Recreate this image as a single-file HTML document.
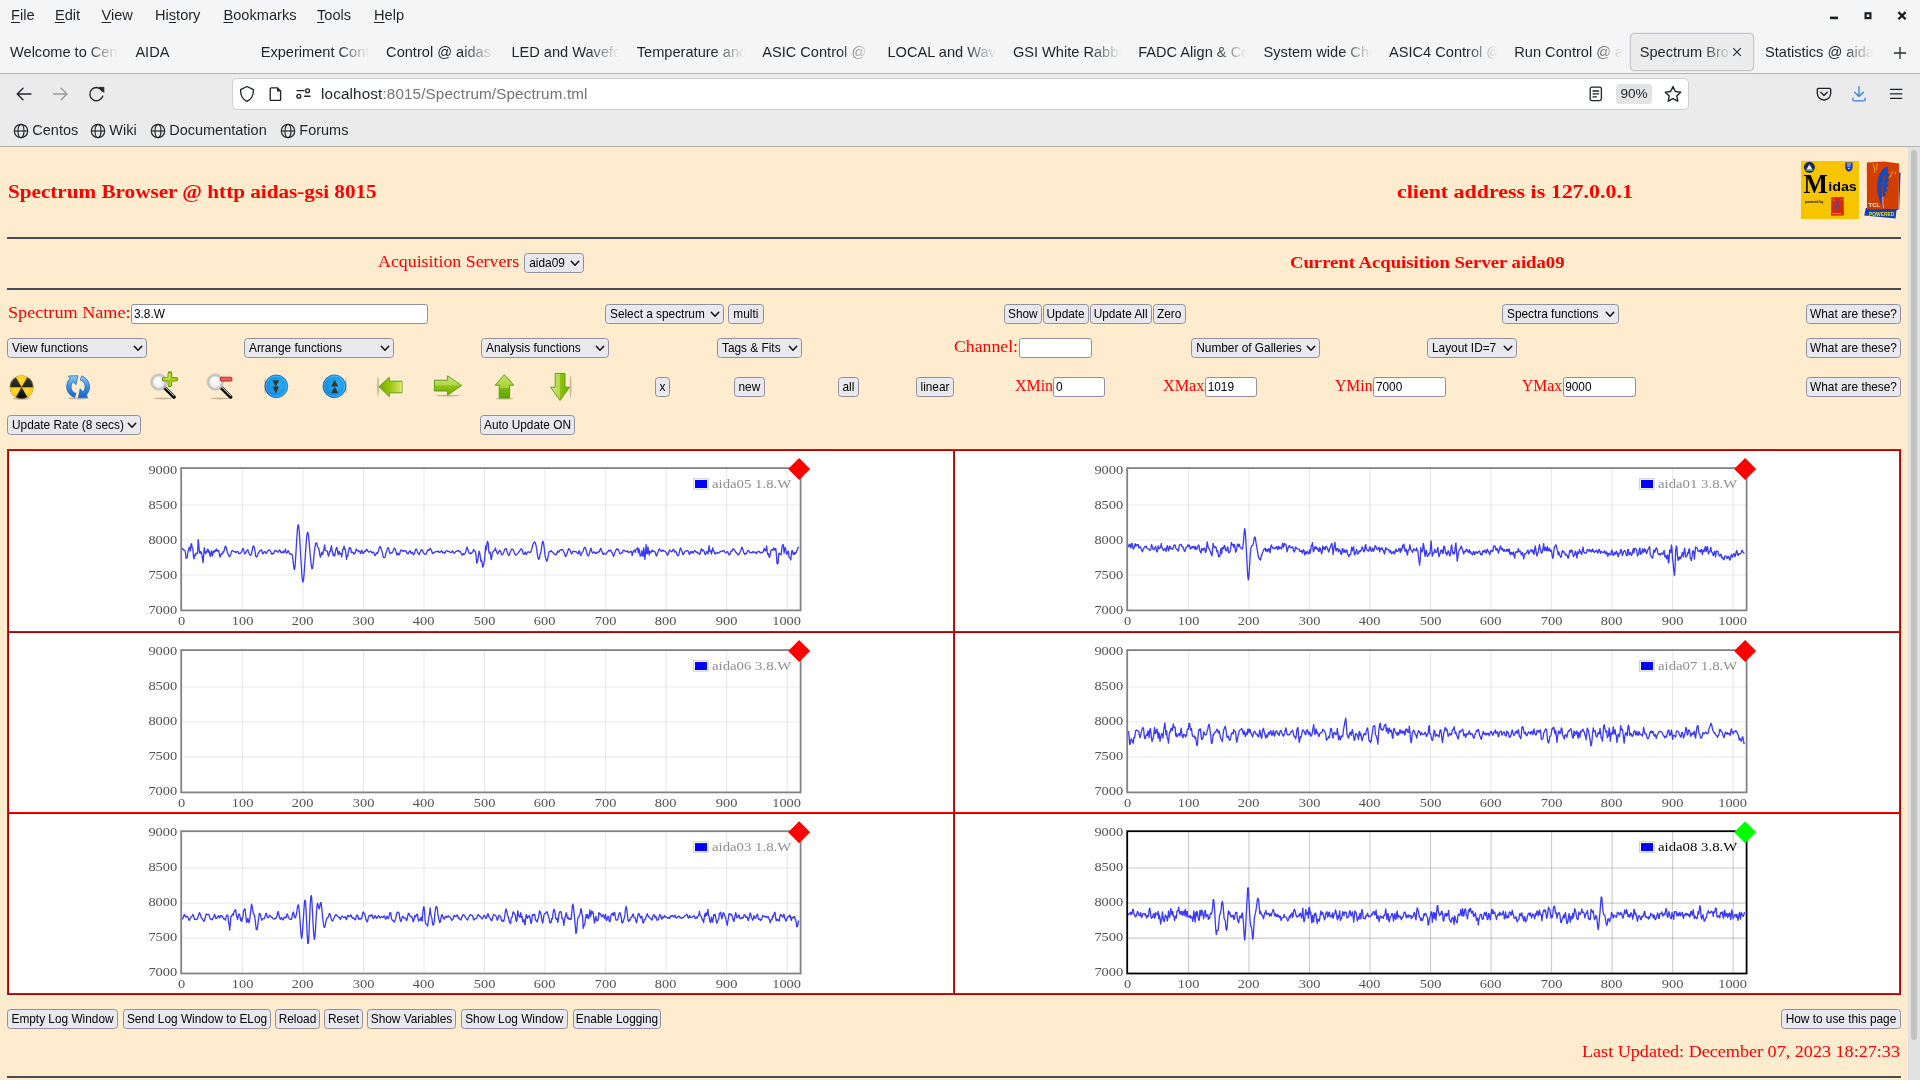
<!DOCTYPE html>
<html><head><meta charset="utf-8"><title>Spectrum Browser</title>
<style>
*{box-sizing:border-box;margin:0;padding:0}
html,body{width:1920px;height:1080px;overflow:hidden;background:#ffebcd;font-family:"Liberation Sans",sans-serif;}
body{position:relative}
.abs,.abs *{position:absolute}
div,span,svg{position:absolute}
/* ---- browser chrome ---- */
#top{left:0;top:0;width:1920px;height:73px;background:#f5f5f5}
#tabline{left:0;top:73px;width:1920px;height:1px;background:#b5b5b5}
#nav{left:0;top:74px;width:1920px;height:72px;background:#ebebeb}
#navline{left:0;top:146px;width:1920px;height:1px;background:#b4b5b2}
.menu{top:6px;font-size:14.6px;color:#1f2326;white-space:pre;line-height:18px}
.menu u{text-decoration:underline;text-underline-offset:2px;text-decoration-thickness:1px}
.tab{top:42.8px;height:19px;width:110px;overflow:hidden;font-size:14.6px;line-height:19px;color:#1f2326;white-space:pre;
  -webkit-mask-image:linear-gradient(to right,#000 0,#000 77px,transparent 108px);mask-image:linear-gradient(to right,#000 0,#000 77px,transparent 108px)}
#acttab{left:1630px;top:33px;width:123.5px;height:37.5px;background:#ececec;border:1px solid #c5c5cb;border-radius:4.5px;box-shadow:0 0 1.5px rgba(0,0,0,.18)}
#url{left:232px;top:78px;width:1457px;height:32px;background:#fff;border:1px solid #cfcfcf;border-radius:5px}
.urltxt{left:321px;top:84px;font-size:15.2px;line-height:20px;color:#1f2326;white-space:pre;letter-spacing:.16px}
.urltxt span{position:static;color:#737373}
#zoom90{left:1616px;top:84px;width:36px;height:20px;background:#e4e4e4;border-radius:3px;font-size:13.6px;line-height:20px;text-align:center;color:#1f2326}
.bm{top:121px;font-size:14.5px;line-height:18px;color:#1f2326;white-space:pre}
/* ---- page ---- */
.red{color:#f00;font-family:"Liberation Serif",serif;white-space:pre}
.hr{left:7px;width:1894px;height:2px;background:#484b52}
.btn{height:19.5px;background:#e9e9ed;border:1px solid #8f8f9d;border-radius:3.5px;font-size:11.85px;line-height:19px;color:#000;text-align:center;white-space:pre;overflow:hidden}
.sel{height:19.5px;background:#e9e9ed;border:1px solid #8f8f9d;border-radius:3.5px;font-size:11.85px;line-height:19px;overflow:hidden;color:#000;white-space:pre;padding-left:4px}
.sel svg{right:2.7px;top:6.2px}
.inp{height:19.5px;background:#fff;border:1px solid #8f8f9d;border-radius:2.5px;font-size:11.85px;line-height:19.4px;color:#000;white-space:pre;padding-left:1.7px;overflow:hidden}
/* ---- table ---- */
.rl{background:#ff0000}
.rd{background:#ad0000}
#tblbg{left:9px;top:451px;width:1890px;height:542px;background:#fff}
.plot{width:621px;height:144px;border:2px solid #808080;background:#fff}
.plot svg{left:0;top:0}
.yl,.xl,.lgt{font-family:"Liberation Serif",serif;font-size:12px;line-height:14px;letter-spacing:0;color:#545454;white-space:pre}
.yl{width:37.2px;text-align:right;transform:scaleX(1.2);transform-origin:100% 50%}
.xl{width:41.2px;text-align:center;transform:scaleX(1.2);transform-origin:50% 50%}
.lgt{transform:scaleX(1.232);transform-origin:0 50%}
.lgbox{width:14px;height:10.5px;border:1px solid #ccc;padding:1px;background:#fff}
.lgbox i{position:absolute;left:1px;top:1px;right:1px;bottom:1px;background:#0000ff;border:1px solid #4d4dff}
.dia{width:16px;height:16px;transform:rotate(45deg)}
#sbtrack{left:1908px;top:147px;width:12px;height:933px;background:#e2e2e0;border-left:1px solid #dfe0df}
#sbthumb{left:1911px;top:149.7px;width:6px;height:890px;background:#c2c4c3;border-radius:3px}

#root{left:0;top:0;width:1920px;height:1080px;will-change:transform;overflow:hidden}

</style></head>
<body>
<div id="root">
<div id="top"></div><div id="tabline"></div><div id="nav"></div><div id="navline"></div>
<div class="menu" style="left:11px"><u>F</u>ile</div>
<div class="menu" style="left:55px"><u>E</u>dit</div>
<div class="menu" style="left:101.5px"><u>V</u>iew</div>
<div class="menu" style="left:155px">Hi<u>s</u>tory</div>
<div class="menu" style="left:223.5px"><u>B</u>ookmarks</div>
<div class="menu" style="left:317px"><u>T</u>ools</div>
<div class="menu" style="left:374px"><u>H</u>elp</div>
<svg style="left:1826px;top:6px" width="88" height="20" viewBox="0 0 88 20"><g fill="none" stroke="#1b1f22"><path d="M4 11.9H12" stroke-width="2.6"/><rect x="39.6" y="7.3" width="4.8" height="4.8" stroke-width="2.2"/><path d="M72.4 6.1L79.6 13.3M79.6 6.1L72.4 13.3" stroke-width="2.3"/></g></svg>
<div id="acttab"></div>
<div class="tab" style="left:10.0px">Welcome to CentOS</div>
<div class="tab" style="left:135.4px">AIDA</div>
<div class="tab" style="left:260.7px">Experiment Control</div>
<div class="tab" style="left:386.1px">Control @ aidas-gsi</div>
<div class="tab" style="left:511.4px">LED and Waveform</div>
<div class="tab" style="left:636.8px">Temperature and</div>
<div class="tab" style="left:762.2px">ASIC Control @ aidas</div>
<div class="tab" style="left:887.5px">LOCAL and Waveform</div>
<div class="tab" style="left:1012.9px">GSI White Rabbit</div>
<div class="tab" style="left:1138.2px">FADC Align & Control</div>
<div class="tab" style="left:1263.6px">System wide Check</div>
<div class="tab" style="left:1389.0px">ASIC4 Control @ aidas</div>
<div class="tab" style="left:1514.3px">Run Control @ aidas</div>
<div class="tab" style="left:1639.7px;width:94px;-webkit-mask-image:linear-gradient(to right,#000 0,#000 62px,transparent 92px);mask-image:linear-gradient(to right,#000 0,#000 62px,transparent 92px)">Spectrum Browser</div>
<div class="tab" style="left:1765.0px">Statistics @ aidas-gsi</div>
<svg style="left:1731px;top:46px" width="12" height="12" viewBox="0 0 12 12"><path d="M2.2 2.2L9.8 9.8M9.8 2.2L2.2 9.8" stroke="#2a2e32" stroke-width="1.2" fill="none"/></svg>
<svg style="left:1893px;top:46px" width="14" height="14" viewBox="0 0 14 14"><path d="M1 7H13M7 1V13" stroke="#2a2e32" stroke-width="1.3" fill="none"/></svg>
<svg style="left:14px;top:84px" width="100" height="20" viewBox="0 0 100 20"><g fill="none" stroke-width="1.4" stroke-linecap="round" stroke-linejoin="round"><path d="M17 10H3.5M9 4.2L3.2 10L9 15.8" stroke="#24282b"/><path d="M39.5 10H53M47.2 4.2L53 10L47.2 15.8" stroke="#9a9a9a"/><path d="M88.3 7.2A6.6 6.6 0 1 0 88.7 12.2" stroke="#24282b"/></g><path d="M85 3.4H89.8V8.3Z" fill="#24282b" stroke="#24282b" stroke-width="1" stroke-linejoin="round"/></svg>
<div id="url"></div>
<svg style="left:238px;top:84px" width="76" height="20" viewBox="0 0 76 20"><g fill="none" stroke="#1f2326" stroke-width="1.35" stroke-linejoin="round" stroke-linecap="round"><path d="M9 2.5L15.4 5.6C15.6 10.5 13.6 15.2 9 17.3C4.4 15.2 2.4 10.5 2.6 5.6Z"/><path d="M33.2 3.8H39.3L42.6 7.1V15.4A1 1 0 0 1 41.6 16.4H33.2A1 1 0 0 1 32.2 15.4V4.8A1 1 0 0 1 33.2 3.8Z"/><path d="M59 6.6H66M66.5 12.2H72"/><circle cx="69.6" cy="6.7" r="1.9"/><circle cx="60.8" cy="12.2" r="1.9"/></g><path d="M39 3.8L42.6 7.4H39Z" fill="#1f2326"/></svg>
<div class="urltxt">localhost<span>:8015/Spectrum/Spectrum.tml</span></div>
<svg style="left:1588px;top:85px" width="16" height="18" viewBox="0 0 16 18"><g fill="none" stroke="#1f2326" stroke-width="1.3" stroke-linecap="round"><rect x="2.2" y="2.2" width="11.2" height="13.4" rx="1.8"/><path d="M5 6H10.6M5 8.9H10.6M5 11.8H8.4"/></g></svg>
<div id="zoom90">90%</div>
<svg style="left:1663px;top:84px" width="20" height="20" viewBox="0 0 20 20"><path d="M10 2.6L12.3 7.5L17.7 8.2L13.8 11.9L14.8 17.2L10 14.6L5.2 17.2L6.2 11.9L2.3 8.2L7.7 7.5Z" fill="none" stroke="#1f2326" stroke-width="1.35" stroke-linejoin="round"/></svg>
<svg style="left:1815px;top:85px" width="18" height="18" viewBox="0 0 18 18"><g fill="none" stroke="#1f2326" stroke-width="1.35" stroke-linecap="round" stroke-linejoin="round"><path d="M3.6 3.3H14.4A1.3 1.3 0 0 1 15.7 4.6V8.3A6.7 6.7 0 0 1 2.3 8.3V4.6A1.3 1.3 0 0 1 3.6 3.3Z"/><path d="M5.8 7.3L9 10.4L12.2 7.3"/></g></svg>
<svg style="left:1850px;top:84px" width="18" height="20" viewBox="0 0 18 20"><g fill="none" stroke="#3584e4" stroke-width="1.35" stroke-linecap="round" stroke-linejoin="round"><path d="M9 2.6V12.4M4.6 8.2L9 12.6L13.4 8.2"/><path d="M2.9 14.2V15.4A1.4 1.4 0 0 0 4.3 16.8H13.7A1.4 1.4 0 0 0 15.1 15.4V14.2"/></g></svg>
<svg style="left:1888px;top:86px" width="16" height="16" viewBox="0 0 16 16"><path d="M2 3.4H14.3M2 7.9H14.3M2 12.4H14.3" stroke="#1f2326" stroke-width="1.35" fill="none"/></svg>
<svg style="left:12.5px;top:122.5px" width="16" height="16" viewBox="0 0 16 16"><g fill="none" stroke="#24282b" stroke-width="1.2"><circle cx="8" cy="8" r="6.7"/><ellipse cx="8" cy="8" rx="3" ry="6.7"/><path d="M1.3 8H14.7"/></g></svg>
<div class="bm" style="left:32.3px">Centos</div>
<svg style="left:90px;top:122.5px" width="16" height="16" viewBox="0 0 16 16"><g fill="none" stroke="#24282b" stroke-width="1.2"><circle cx="8" cy="8" r="6.7"/><ellipse cx="8" cy="8" rx="3" ry="6.7"/><path d="M1.3 8H14.7"/></g></svg>
<div class="bm" style="left:109.3px">Wiki</div>
<svg style="left:150px;top:122.5px" width="16" height="16" viewBox="0 0 16 16"><g fill="none" stroke="#24282b" stroke-width="1.2"><circle cx="8" cy="8" r="6.7"/><ellipse cx="8" cy="8" rx="3" ry="6.7"/><path d="M1.3 8H14.7"/></g></svg>
<div class="bm" style="left:169.2px">Documentation</div>
<svg style="left:279.5px;top:122.5px" width="16" height="16" viewBox="0 0 16 16"><g fill="none" stroke="#24282b" stroke-width="1.2"><circle cx="8" cy="8" r="6.7"/><ellipse cx="8" cy="8" rx="3" ry="6.7"/><path d="M1.3 8H14.7"/></g></svg>
<div class="bm" style="left:299.3px">Forums</div>
<div id="sbtrack"></div><div id="sbthumb"></div>
<div class="red" style="left:7.5px;top:179.88px;font-size:19.6px;line-height:23.5px;letter-spacing:0;transform:scaleX(1.0799);transform-origin:0 0;font-weight:700;">Spectrum Browser @ http aidas-gsi 8015</div>
<div class="red" style="left:1397px;top:179.88px;font-size:19.6px;line-height:23.5px;letter-spacing:0;transform:scaleX(1.119);transform-origin:0 0;font-weight:700;">client address is 127.0.0.1</div>
<div class="hr" style="top:237px"></div>
<div class="red" style="left:377.5px;top:251.53px;font-size:16.5px;line-height:19.8px;letter-spacing:0;transform:scaleX(1.0815);transform-origin:0 0;">Acquisition Servers</div>
<div class="sel" style="left:524.25px;top:253.25px;width:59.5px">aida09<svg width="10" height="7" viewBox="0 0 10 7"><path d="M1.3 1.2L5 5.2L8.7 1.2" fill="none" stroke="#15141a" stroke-width="1.55" stroke-linecap="round" stroke-linejoin="round"/></svg></div>
<div class="red" style="left:1290px;top:251.59px;font-size:17.5px;line-height:21.0px;letter-spacing:0;transform:scaleX(1.066);transform-origin:0 0;font-weight:700;">Current Acquisition Server aida09</div>
<div class="hr" style="top:288px"></div>
<div class="red" style="left:7.5px;top:302.53px;font-size:16.5px;line-height:19.8px;letter-spacing:0;transform:scaleX(1.1006);transform-origin:0 0;">Spectrum Name:</div>
<div class="inp" style="left:131.25px;top:304.25px;width:296.75px">3.8.W</div>
<div class="sel" style="left:605px;top:304.25px;width:118.75px">Select a spectrum<svg width="10" height="7" viewBox="0 0 10 7"><path d="M1.3 1.2L5 5.2L8.7 1.2" fill="none" stroke="#15141a" stroke-width="1.55" stroke-linecap="round" stroke-linejoin="round"/></svg></div>
<div class="btn" style="left:728px;top:304.25px;width:35.75px">multi</div>
<div class="btn" style="left:1004.25px;top:304.25px;width:37.25px">Show</div>
<div class="btn" style="left:1042.5px;top:304.25px;width:46.25px">Update</div>
<div class="btn" style="left:1089.5px;top:304.25px;width:62.25px">Update All</div>
<div class="btn" style="left:1152.5px;top:304.25px;width:33.25px">Zero</div>
<div class="sel" style="left:1502px;top:304.25px;width:116.75px">Spectra functions<svg width="10" height="7" viewBox="0 0 10 7"><path d="M1.3 1.2L5 5.2L8.7 1.2" fill="none" stroke="#15141a" stroke-width="1.55" stroke-linecap="round" stroke-linejoin="round"/></svg></div>
<div class="btn" style="left:1806px;top:304.25px;width:95px">What are these?</div>
<div class="sel" style="left:7px;top:338.25px;width:139.75px">View functions<svg width="10" height="7" viewBox="0 0 10 7"><path d="M1.3 1.2L5 5.2L8.7 1.2" fill="none" stroke="#15141a" stroke-width="1.55" stroke-linecap="round" stroke-linejoin="round"/></svg></div>
<div class="sel" style="left:244px;top:338.25px;width:150px">Arrange functions<svg width="10" height="7" viewBox="0 0 10 7"><path d="M1.3 1.2L5 5.2L8.7 1.2" fill="none" stroke="#15141a" stroke-width="1.55" stroke-linecap="round" stroke-linejoin="round"/></svg></div>
<div class="sel" style="left:481px;top:338.25px;width:127.75px">Analysis functions<svg width="10" height="7" viewBox="0 0 10 7"><path d="M1.3 1.2L5 5.2L8.7 1.2" fill="none" stroke="#15141a" stroke-width="1.55" stroke-linecap="round" stroke-linejoin="round"/></svg></div>
<div class="sel" style="left:717px;top:338.25px;width:84.75px">Tags &amp; Fits<svg width="10" height="7" viewBox="0 0 10 7"><path d="M1.3 1.2L5 5.2L8.7 1.2" fill="none" stroke="#15141a" stroke-width="1.55" stroke-linecap="round" stroke-linejoin="round"/></svg></div>
<div class="red" style="left:954.25px;top:337.08px;font-size:16.5px;line-height:19.8px;letter-spacing:0;transform:scaleX(1.0744);transform-origin:0 0;">Channel:</div>
<div class="inp" style="left:1019.25px;top:338.25px;width:72.75px"></div>
<div class="sel" style="left:1191.25px;top:338.25px;width:128.5px">Number of Galleries<svg width="10" height="7" viewBox="0 0 10 7"><path d="M1.3 1.2L5 5.2L8.7 1.2" fill="none" stroke="#15141a" stroke-width="1.55" stroke-linecap="round" stroke-linejoin="round"/></svg></div>
<div class="sel" style="left:1427px;top:338.25px;width:89.75px">Layout ID=7<svg width="10" height="7" viewBox="0 0 10 7"><path d="M1.3 1.2L5 5.2L8.7 1.2" fill="none" stroke="#15141a" stroke-width="1.55" stroke-linecap="round" stroke-linejoin="round"/></svg></div>
<div class="btn" style="left:1806px;top:338.25px;width:95px">What are these?</div>
<div class="btn" style="left:655px;top:377.25px;width:15px">x</div>
<div class="btn" style="left:734px;top:377.25px;width:30.75px">new</div>
<div class="btn" style="left:838px;top:377.25px;width:20.75px">all</div>
<div class="btn" style="left:916.25px;top:377.25px;width:37.5px">linear</div>
<div class="red" style="left:1014.5px;top:375.75px;font-size:16px;line-height:19.2px;letter-spacing:0;transform:scaleX(0.994);transform-origin:0 0;">XMin</div>
<div class="inp" style="left:1053.25px;top:377.25px;width:51.75px">0</div>
<div class="red" style="left:1163px;top:375.75px;font-size:16px;line-height:19.2px;letter-spacing:0;transform:scaleX(1.009);transform-origin:0 0;">XMax</div>
<div class="inp" style="left:1205px;top:377.25px;width:52px">1019</div>
<div class="red" style="left:1335px;top:375.75px;font-size:16px;line-height:19.2px;letter-spacing:0;transform:scaleX(0.981);transform-origin:0 0;">YMin</div>
<div class="inp" style="left:1373.25px;top:377.25px;width:72.5px">7000</div>
<div class="red" style="left:1521.75px;top:375.75px;font-size:16px;line-height:19.2px;letter-spacing:0;transform:scaleX(0.978);transform-origin:0 0;">YMax</div>
<div class="inp" style="left:1562.5px;top:377.25px;width:73.25px">9000</div>
<div class="btn" style="left:1806px;top:377.25px;width:95px">What are these?</div>
<div class="sel" style="left:7px;top:415.25px;width:133.75px">Update Rate (8 secs)<svg width="10" height="7" viewBox="0 0 10 7"><path d="M1.3 1.2L5 5.2L8.7 1.2" fill="none" stroke="#15141a" stroke-width="1.55" stroke-linecap="round" stroke-linejoin="round"/></svg></div>
<div class="btn" style="left:480px;top:415.25px;width:95px">Auto Update ON</div>
<div class="btn" style="left:7px;top:1009.25px;width:111px">Empty Log Window</div>
<div class="btn" style="left:123px;top:1009.25px;width:148px">Send Log Window to ELog</div>
<div class="btn" style="left:275px;top:1009.25px;width:45px">Reload</div>
<div class="btn" style="left:324px;top:1009.25px;width:39px">Reset</div>
<div class="btn" style="left:367px;top:1009.25px;width:89px">Show Variables</div>
<div class="btn" style="left:460.5px;top:1009.25px;width:107.5px">Show Log Window</div>
<div class="btn" style="left:573px;top:1009.25px;width:88px">Enable Logging</div>
<div class="btn" style="left:1781.25px;top:1009.25px;width:119.5px">How to use this page</div>
<div class="red" style="left:1582px;top:1041.53px;font-size:16.5px;line-height:19.8px;letter-spacing:0;transform:scaleX(1.098);transform-origin:0 0;">Last Updated: December 07, 2023 18:27:33</div>
<div class="hr" style="top:1076px"></div>
<div id="tblbg"></div>
<div class="rl" style="left:7px;top:449px;width:1894px;height:1px"></div>
<div class="rd" style="left:8px;top:450px;width:1893px;height:1px"></div>
<div class="rl" style="left:7px;top:631px;width:1894px;height:1px"></div>
<div class="rd" style="left:8px;top:632px;width:1893px;height:1px"></div>
<div class="rl" style="left:7px;top:812px;width:1894px;height:1px"></div>
<div class="rd" style="left:8px;top:813px;width:1893px;height:1px"></div>
<div class="rl" style="left:7px;top:993px;width:1894px;height:1px"></div>
<div class="rd" style="left:8px;top:994px;width:1893px;height:1px"></div>
<div class="rl" style="left:7px;top:449px;width:1px;height:546px"></div>
<div class="rd" style="left:8px;top:450px;width:1px;height:545px"></div>
<div class="rl" style="left:953px;top:449px;width:1px;height:546px"></div>
<div class="rd" style="left:954px;top:450px;width:1px;height:545px"></div>
<div class="rl" style="left:1899px;top:449px;width:1px;height:546px"></div>
<div class="rd" style="left:1900px;top:450px;width:1px;height:545px"></div>
<svg style="left:0;top:366px" width="600" height="40" viewBox="0 366 600 40">
<defs>
<radialGradient id="gy" cx="0.5" cy="0.35" r="0.7"><stop offset="0" stop-color="#ffe23a"/><stop offset="1" stop-color="#f2b400"/></radialGradient>
<linearGradient id="gbk" x1="0" y1="0" x2="0" y2="1"><stop offset="0" stop-color="#3a3a3a"/><stop offset="1" stop-color="#0a0a0a"/></linearGradient>
<linearGradient id="gbl" x1="0" y1="0" x2="0" y2="1"><stop offset="0" stop-color="#8ec8f4"/><stop offset="0.5" stop-color="#3a8fe0"/><stop offset="1" stop-color="#1766c8"/></linearGradient>
<radialGradient id="gbc" cx="0.6" cy="0.45" r="0.6"><stop offset="0" stop-color="#2cb2f2"/><stop offset="0.8" stop-color="#1492e4"/><stop offset="1" stop-color="#0b6cc6"/></radialGradient>
<radialGradient id="glens" cx="0.45" cy="0.4" r="0.6"><stop offset="0" stop-color="#ffffff"/><stop offset="1" stop-color="#ebe6e4"/></radialGradient>
<linearGradient id="ggl" x1="0" y1="0" x2="1" y2="0"><stop offset="0" stop-color="#6fb000"/><stop offset="0.45" stop-color="#9ac40c"/><stop offset="1" stop-color="#dbe66a"/></linearGradient>
<linearGradient id="ggr" x1="0" y1="0" x2="0" y2="1"><stop offset="0" stop-color="#cfe58a"/><stop offset="0.45" stop-color="#b4d64a"/><stop offset="0.55" stop-color="#8cbf10"/><stop offset="1" stop-color="#74b000"/></linearGradient>
<linearGradient id="ggu" x1="0" y1="0" x2="0" y2="1"><stop offset="0" stop-color="#cbe268"/><stop offset="0.55" stop-color="#a9cf3a"/><stop offset="0.6" stop-color="#79b70c"/><stop offset="1" stop-color="#5ea800"/></linearGradient>
<linearGradient id="ggd" x1="0" y1="0" x2="1" y2="0"><stop offset="0" stop-color="#d6e88a"/><stop offset="0.48" stop-color="#b4d64a"/><stop offset="0.52" stop-color="#8fc010"/><stop offset="1" stop-color="#74b400"/></linearGradient>
<filter id="bl"><feGaussianBlur stdDeviation="0.7"/></filter>
</defs>
<!-- shadows -->
<g fill="#6b5a40" opacity="0.35" filter="url(#bl)">
<ellipse cx="21.6" cy="398.6" rx="9" ry="1.1"/><ellipse cx="78" cy="398.4" rx="10" ry="1"/>
<ellipse cx="163" cy="398.4" rx="9" ry="1"/><ellipse cx="220" cy="398.4" rx="9" ry="1"/>
<ellipse cx="448" cy="395.6" rx="12" ry="1"/><ellipse cx="378" cy="386.6" rx="1" ry="10"/><ellipse cx="570.6" cy="386.6" rx="1" ry="11"/><ellipse cx="265.2" cy="386.3" rx="0.9" ry="8"/><ellipse cx="345.9" cy="386.3" rx="0.9" ry="8"/><ellipse cx="504.5" cy="398.6" rx="9" ry="1"/>
</g>
<!-- radiation -->
<circle cx="21.6" cy="387.2" r="11.8" fill="url(#gbk)"/>
<g fill="url(#gy)">
<path d="M21.6 387.2L15.7 376.98A11.8 11.8 0 0 1 27.5 376.98Z"/>
<path d="M21.6 387.2L9.8 387.2A11.8 11.8 0 0 0 15.7 397.42Z"/>
<path d="M21.6 387.2L33.4 387.2A11.8 11.8 0 0 1 27.5 397.42Z"/>
</g>
<circle cx="21.6" cy="387.2" r="11.5" fill="none" stroke="#f8d060" stroke-opacity="0.55" stroke-width="0.7"/>
<!-- refresh -->
<g fill="url(#gbl)" stroke="#1a62c0" stroke-width="0.7" stroke-linejoin="round">
<path d="M74.6 397.6A11.6 11.6 0 0 1 69.8 378.6L68.6 375.9L77.9 375.7L76 384.7L73.3 381.7A7 7 0 0 0 76 393.5Z"/>
<path d="M81.60 375.90 A11.6 11.6 0 0 1 86.40 394.90 L87.60 397.60 L78.30 397.80 L80.20 388.80 L82.90 391.80 A7 7 0 0 0 80.20 380.00 Z"/>
</g>
<!-- zoom in -->
<g>
<path d="M165 388L174 397" stroke="#101010" stroke-width="3.8" stroke-linecap="round"/>
<path d="M165.6 387.4L174 395.8" stroke="#fff" stroke-width="1" stroke-linecap="round" opacity="0.9"/>
<circle cx="158.8" cy="382.1" r="7" fill="url(#glens)" stroke="#c6c6c6" stroke-width="2.4"/>
<circle cx="158.8" cy="382.1" r="8.2" fill="none" stroke="#a8a8a8" stroke-width="0.4"/>
<path d="M169.9 373.6V385M164 379.3H175.8" stroke="#5f9a08" stroke-width="4.6" stroke-linecap="round"/>
<path d="M169.9 373.9V384.7M164.3 379.3H175.5" stroke="#a6cc1e" stroke-width="3" stroke-linecap="round"/>
<path d="M169.4 374.2V378.6M164.8 378.8H169" stroke="#e0f06a" stroke-width="1" stroke-linecap="round"/>
</g>
<!-- zoom out -->
<g>
<path d="M221.6 388L230.6 397" stroke="#101010" stroke-width="3.8" stroke-linecap="round"/>
<path d="M222.2 387.4L230.6 395.8" stroke="#fff" stroke-width="1" stroke-linecap="round" opacity="0.9"/>
<circle cx="215.3" cy="382.1" r="7" fill="url(#glens)" stroke="#c6c6c6" stroke-width="2.4"/>
<circle cx="215.3" cy="382.1" r="8.2" fill="none" stroke="#a8a8a8" stroke-width="0.4"/>
<rect x="220.3" y="377.2" width="11.6" height="3.9" rx="1" fill="#e86060" stroke="#c00808" stroke-width="0.8"/>
</g>
<!-- blue down / up -->
<circle cx="276.3" cy="386.3" r="11.4" fill="url(#gbc)" stroke="#0a62b8" stroke-width="0.7"/>
<circle cx="276.3" cy="386.3" r="10.2" fill="none" stroke="#8fd6fb" stroke-opacity="0.6" stroke-width="0.8"/>
<path d="M272.4 380.2H279.2L275.8 387ZM272.4 386.6H279.2L275.8 393.4Z" fill="#353535"/>
<circle cx="334.4" cy="386.3" r="11.4" fill="url(#gbc)" stroke="#0a62b8" stroke-width="0.7"/>
<circle cx="334.4" cy="386.3" r="10.2" fill="none" stroke="#8fd6fb" stroke-opacity="0.6" stroke-width="0.8"/>
<path d="M331.1 386.6H338.3L334.7 379.8ZM331.1 393.2H338.3L334.7 386.4Z" fill="#353535"/>
<!-- arrows -->
<path d="M379 386.7L389.3 377.3V381.2H402V392.8H389.3V396.6Z" fill="url(#ggl)" stroke="#4f9a0c" stroke-width="0.9" stroke-linejoin="round"/>
<path d="M401.2 382V392" stroke="#f0f5a0" stroke-width="0.7"/>
<path d="M461.6 385.4L447.6 375.8V380.2H434.4V391H447.6V395.2Z" fill="url(#ggr)" stroke="#4f9a0c" stroke-width="0.9" stroke-linejoin="round"/>
<path d="M504.4 374.7L513.8 385.2H509.6V397.9H499.2V385.2H495.2Z" fill="url(#ggu)" stroke="#4f9a0c" stroke-width="0.9" stroke-linejoin="round"/>
<path d="M560 400.4L569.5 387.2H565V373.4H555.2V387.2H550.6Z" fill="url(#ggd)" stroke="#4f9a0c" stroke-width="0.9" stroke-linejoin="round"/>
</svg>

<svg style="left:1796px;top:156px" width="110" height="68" viewBox="1796 156 110 68">
<defs><filter id="lb"><feGaussianBlur stdDeviation="0.35"/></filter></defs>
<g filter="url(#lb)">
<rect x="1801" y="161" width="58" height="58" fill="#f7c400"/>
<circle cx="1809.4" cy="167.3" r="5.5" fill="#142a5c"/>
<path d="M1806.2 169.6L1809.4 164.6L1812.6 169.6Z" fill="#e8f0f4"/>
<path d="M1805.6 170.2H1813.2" stroke="#b8c8d8" stroke-width="0.8"/>
<path d="M1845.2 162.4H1852.6V167.4C1852.6 169.8 1850.8 171.2 1848.9 171.8C1847 171.2 1845.2 169.8 1845.2 167.4Z" fill="#2238b4"/>
<path d="M1846.8 164H1851M1847.2 166H1850.6M1848 168.4H1850" stroke="#dfe6ff" stroke-width="0.9"/>
<text x="1803.6" y="193.4" font-family="Liberation Serif" font-weight="700" font-size="27.5" textLength="24.4" lengthAdjust="spacingAndGlyphs" fill="#000">M</text>
<text x="1828.2" y="190.5" font-family="Liberation Sans" font-weight="700" font-size="13.2" textLength="28.6" lengthAdjust="spacingAndGlyphs" fill="#000">idas</text>
<text x="1805.2" y="203" font-family="Liberation Sans" font-weight="700" font-size="3.9" textLength="18" lengthAdjust="spacingAndGlyphs" fill="#000">powered by</text>
<path d="M1831.2 197.2L1843.6 197L1843.9 215.6L1831 215.8Z" fill="#d62c10"/>
<path d="M1838.4 200.2C1836.2 202 1835.6 206 1836.4 210.6C1838 207.6 1839.2 203.6 1838.4 200.2Z" fill="#2858c8"/>
<path d="M1833.4 198.8L1834.6 201.6M1840.6 200.4L1841.6 199" stroke="#f2a020" stroke-width="0.6"/>
<path d="M1832.6 213.6H1841.4" stroke="#e8c040" stroke-width="1" stroke-dasharray="1.2 0.5"/>
</g>
<g filter="url(#lb)">
<path d="M1865.8 208L1864.2 215.6L1895.6 218.6L1896.4 210.4L1899.2 209L1900.6 172.6L1898.6 172.2L1898.6 208.6Z" fill="#1440b0"/>
<path d="M1866.8 162.4L1884 161.4L1899 163.4L1898.4 208.8L1867 209.6Z" fill="#d23c00"/>
<path d="M1887.4 166.4C1881 168 1877.4 177 1877.2 186C1877 195 1880 203 1883.2 207.4C1882.4 202 1882.6 199 1883.4 196.4L1886 195.4L1885 192.6L1887.6 191L1886.2 188L1888.6 186L1887 183.2L1889 180.6L1887.4 178L1889.6 174.6L1887.6 173C1888.4 171 1888.4 168.6 1887.4 166.4Z" fill="#1c48b4"/>
<path d="M1883.2 207.4C1881.8 199 1881.8 188 1884.8 176" stroke="#d23c00" stroke-width="0.7" fill="none"/>
<path d="M1883 196.6C1882.6 200.6 1882.8 204.6 1883.6 208" stroke="#e8e8f0" stroke-width="0.7" fill="none"/>
<path d="M1873.2 163.8C1874 166.6 1874.6 169.4 1874.8 172.6M1877.2 163.4C1876.8 165.4 1876.6 167.6 1876.8 170M1892.4 171.6C1891.8 173.6 1891 175.8 1890 177.6M1895.6 172.4L1895 174" stroke="#f5a81c" stroke-width="1" fill="none" stroke-linecap="round"/>
<text x="1868.4" y="207" font-family="Liberation Sans" font-weight="700" font-size="5.6" textLength="12" lengthAdjust="spacingAndGlyphs" fill="#f4ecec">TCL</text>
<text x="1869" y="215.5" font-family="Liberation Sans" font-weight="700" font-size="5.6" textLength="25.2" lengthAdjust="spacingAndGlyphs" fill="#e8e02a">POWERED</text>
</g>
</svg>

<svg style="left:176px;top:453px" width="640" height="172" viewBox="176 453 640 172">
<rect x="181.20" y="468.10" width="619.40" height="142.30" fill="#fff" stroke="none"/>
<line x1="242.43" y1="469.00" x2="242.43" y2="609.50" stroke="rgba(84,84,84,0.13)" stroke-width="1.1"/>
<line x1="302.95" y1="469.00" x2="302.95" y2="609.50" stroke="rgba(84,84,84,0.13)" stroke-width="1.1"/>
<line x1="363.48" y1="469.00" x2="363.48" y2="609.50" stroke="rgba(84,84,84,0.13)" stroke-width="1.1"/>
<line x1="424.00" y1="469.00" x2="424.00" y2="609.50" stroke="rgba(84,84,84,0.13)" stroke-width="1.1"/>
<line x1="484.52" y1="469.00" x2="484.52" y2="609.50" stroke="rgba(84,84,84,0.13)" stroke-width="1.1"/>
<line x1="545.05" y1="469.00" x2="545.05" y2="609.50" stroke="rgba(84,84,84,0.13)" stroke-width="1.1"/>
<line x1="605.58" y1="469.00" x2="605.58" y2="609.50" stroke="rgba(84,84,84,0.13)" stroke-width="1.1"/>
<line x1="666.10" y1="469.00" x2="666.10" y2="609.50" stroke="rgba(84,84,84,0.13)" stroke-width="1.1"/>
<line x1="726.62" y1="469.00" x2="726.62" y2="609.50" stroke="rgba(84,84,84,0.13)" stroke-width="1.1"/>
<line x1="787.15" y1="469.00" x2="787.15" y2="609.50" stroke="rgba(84,84,84,0.13)" stroke-width="1.1"/>
<line x1="182.10" y1="504.95" x2="799.70" y2="504.95" stroke="rgba(84,84,84,0.13)" stroke-width="1.1"/>
<line x1="182.10" y1="540.00" x2="799.70" y2="540.00" stroke="rgba(84,84,84,0.13)" stroke-width="1.1"/>
<line x1="182.10" y1="575.05" x2="799.70" y2="575.05" stroke="rgba(84,84,84,0.13)" stroke-width="1.1"/>
<polyline fill="none" stroke="#3838ff" stroke-width="1.3" stroke-linejoin="round" points="181.9,548.0 182.5,549.2 183.1,549.0 183.7,550.2 184.3,550.1 184.9,550.6 185.5,553.1 186.1,558.3 186.7,558.2 187.3,556.9 188.0,551.4 188.6,549.8 189.2,547.2 189.8,548.6 190.4,551.0 191.0,544.4 191.6,543.7 192.2,547.8 192.8,548.3 193.4,556.4 194.0,558.8 194.6,554.8 195.2,555.8 195.8,553.4 196.4,553.2 197.0,553.9 197.6,552.8 198.2,539.6 198.8,545.0 199.5,552.1 200.1,553.5 200.7,551.5 201.3,552.3 201.9,554.8 202.5,558.8 203.1,562.7 203.7,554.4 204.3,547.7 204.9,551.9 205.5,553.9 206.1,551.7 206.7,552.3 207.3,549.8 207.9,549.0 208.5,552.1 209.1,550.9 209.7,554.4 210.3,556.5 211.0,552.5 211.6,550.9 212.2,556.0 212.8,553.9 213.4,551.1 214.0,552.4 214.6,550.9 215.2,550.2 215.8,551.4 216.4,549.0 217.0,550.6 217.6,551.0 218.2,550.3 218.8,550.7 219.4,554.5 220.0,557.1 220.6,555.9 221.2,553.7 221.8,554.4 222.5,553.8 223.1,551.4 223.7,552.0 224.3,550.1 224.9,547.3 225.5,546.1 226.1,547.0 226.7,549.5 227.3,551.9 227.9,553.7 228.5,555.4 229.1,556.2 229.7,556.7 230.3,555.4 230.9,553.7 231.5,551.3 232.1,550.6 232.7,550.7 233.3,551.1 234.0,551.6 234.6,551.9 235.2,551.6 235.8,552.5 236.4,552.5 237.0,551.3 237.6,551.4 238.2,552.0 238.8,553.5 239.4,553.6 240.0,553.5 240.6,552.9 241.2,552.3 241.8,551.3 242.4,549.5 243.0,548.4 243.6,549.8 244.2,552.4 244.8,554.0 245.5,553.1 246.1,552.2 246.7,550.8 247.3,549.9 247.9,550.0 248.5,551.9 249.1,553.5 249.7,554.7 250.3,555.3 250.9,555.1 251.5,553.5 252.1,550.6 252.7,547.3 253.3,546.0 253.9,546.4 254.5,548.5 255.1,551.8 255.7,556.0 256.3,557.1 257.0,556.7 257.6,555.3 258.2,553.0 258.8,552.6 259.4,551.3 260.0,550.8 260.6,550.9 261.2,549.8 261.8,550.1 262.4,553.5 263.0,553.9 263.6,552.8 264.2,551.7 264.8,551.7 265.4,552.3 266.0,553.4 266.6,553.1 267.2,551.6 267.8,550.8 268.5,550.2 269.1,549.8 269.7,549.9 270.3,551.1 270.9,552.0 271.5,553.7 272.1,554.2 272.7,553.3 273.3,553.9 273.9,552.9 274.5,551.4 275.1,550.2 275.7,550.8 276.3,551.1 276.9,551.0 277.5,551.7 278.1,552.3 278.7,551.2 279.3,549.9 280.0,550.3 280.6,551.7 281.2,552.9 281.8,551.9 282.4,552.2 283.0,552.6 283.6,551.3 284.2,552.6 284.8,551.3 285.4,549.1 286.0,551.9 286.6,553.2 287.2,552.5 287.8,551.1 288.4,550.8 289.0,552.5 289.6,553.8 290.2,553.7 290.8,554.3 291.5,554.2 292.1,554.6 292.7,558.0 293.3,562.8 293.9,568.3 294.5,569.5 295.1,565.5 295.7,557.1 296.3,546.7 296.9,536.9 297.5,528.6 298.1,524.7 298.7,526.2 299.3,532.3 299.9,541.8 300.5,552.3 301.1,562.5 301.7,572.3 302.3,579.7 302.9,582.1 303.6,579.5 304.2,572.4 304.8,563.2 305.4,554.1 306.0,545.6 306.6,538.2 307.2,533.1 307.8,532.1 308.4,534.9 309.0,540.7 309.6,547.7 310.2,554.7 310.8,561.0 311.4,566.3 312.0,568.9 312.6,567.9 313.2,563.9 313.8,557.7 314.4,551.1 315.1,546.5 315.7,543.6 316.3,542.8 316.9,543.6 317.5,546.5 318.1,547.5 318.7,548.5 319.3,551.2 319.9,555.4 320.5,557.2 321.1,554.8 321.7,552.1 322.3,554.3 322.9,554.1 323.5,550.2 324.1,548.2 324.7,544.9 325.3,550.7 325.9,550.6 326.6,550.9 327.2,550.9 327.8,553.7 328.4,556.1 329.0,554.9 329.6,551.1 330.2,551.8 330.8,549.0 331.4,545.7 332.0,550.1 332.6,552.5 333.2,555.5 333.8,554.2 334.4,555.9 335.0,554.4 335.6,550.5 336.2,548.6 336.8,547.4 337.4,550.0 338.1,554.7 338.7,552.6 339.3,551.3 339.9,554.0 340.5,554.0 341.1,553.6 341.7,556.9 342.3,552.7 342.9,548.8 343.5,548.8 344.1,546.0 344.7,549.3 345.3,549.3 345.9,553.9 346.5,559.4 347.1,555.6 347.7,556.4 348.3,552.6 348.9,549.1 349.6,547.5 350.2,548.7 350.8,548.3 351.4,552.6 352.0,552.3 352.6,552.2 353.2,552.3 353.8,554.3 354.4,553.6 355.0,553.0 355.6,552.1 356.2,549.0 356.8,550.3 357.4,550.4 358.0,550.6 358.6,551.6 359.2,551.0 359.8,551.3 360.4,553.5 361.1,552.2 361.7,550.2 362.3,551.8 362.9,553.5 363.5,553.2 364.1,552.1 364.7,551.0 365.3,551.6 365.9,550.4 366.5,549.3 367.1,549.4 367.7,551.0 368.3,551.5 368.9,552.2 369.5,552.0 370.1,551.5 370.7,551.1 371.3,551.7 371.9,552.9 372.6,552.5 373.2,552.2 373.8,552.5 374.4,554.3 375.0,555.7 375.6,554.7 376.2,553.9 376.8,552.7 377.4,553.4 378.0,552.4 378.6,550.1 379.2,547.9 379.8,546.9 380.4,546.6 381.0,548.3 381.6,550.4 382.2,552.3 382.8,554.7 383.4,557.3 384.1,557.7 384.7,557.7 385.3,556.4 385.9,553.2 386.5,551.8 387.1,549.6 387.7,547.9 388.3,547.7 388.9,549.4 389.5,552.0 390.1,553.6 390.7,552.8 391.3,552.7 391.9,552.8 392.5,552.2 393.1,550.9 393.7,549.2 394.3,548.0 394.9,548.7 395.6,550.1 396.2,552.3 396.8,554.9 397.4,554.7 398.0,553.0 398.6,554.4 399.2,554.9 399.8,553.6 400.4,550.7 401.0,549.9 401.6,550.6 402.2,551.1 402.8,550.5 403.4,551.3 404.0,551.2 404.6,550.8 405.2,550.6 405.8,550.6 406.4,552.0 407.1,553.6 407.7,553.2 408.3,553.7 408.9,552.0 409.5,551.3 410.1,550.8 410.7,552.5 411.3,553.4 411.9,552.2 412.5,552.5 413.1,554.2 413.7,554.9 414.3,553.8 414.9,552.1 415.5,549.9 416.1,549.0 416.7,549.3 417.3,551.7 417.9,553.0 418.6,553.9 419.2,554.7 419.8,552.9 420.4,551.8 421.0,550.3 421.6,549.7 422.2,550.0 422.8,551.2 423.4,552.9 424.0,553.3 424.6,554.2 425.2,554.4 425.8,554.3 426.4,553.5 427.0,551.7 427.6,550.2 428.2,549.7 428.8,550.5 429.4,549.4 430.1,548.3 430.7,549.3 431.3,550.0 431.9,551.8 432.5,553.7 433.1,553.0 433.7,552.7 434.3,552.4 434.9,552.0 435.5,551.8 436.1,551.6 436.7,551.7 437.3,551.2 437.9,551.5 438.5,551.2 439.1,552.4 439.7,552.6 440.3,551.8 440.9,551.5 441.6,550.6 442.2,551.9 442.8,552.8 443.4,552.2 444.0,552.4 444.6,553.2 445.2,552.6 445.8,551.2 446.4,550.8 447.0,550.7 447.6,551.2 448.2,551.5 448.8,551.6 449.4,551.4 450.0,552.2 450.6,552.6 451.2,552.3 451.8,551.9 452.4,550.9 453.1,551.9 453.7,552.8 454.3,553.3 454.9,552.8 455.5,551.7 456.1,551.3 456.7,551.3 457.3,550.8 457.9,550.7 458.5,550.3 459.1,551.4 459.7,551.9 460.3,551.5 460.9,552.8 461.5,553.5 462.1,555.2 462.7,554.7 463.3,553.5 463.9,554.5 464.6,554.1 465.2,553.0 465.8,552.1 466.4,548.7 467.0,547.1 467.6,548.8 468.2,550.2 468.8,552.2 469.4,553.7 470.0,553.5 470.6,552.9 471.2,553.8 471.8,552.7 472.4,552.3 473.0,551.5 473.6,549.5 474.2,550.3 474.8,551.0 475.4,551.8 476.1,555.7 476.7,563.2 477.3,561.9 477.9,559.5 478.5,555.1 479.1,551.2 479.7,552.9 480.3,556.5 480.9,561.4 481.5,560.2 482.1,562.5 482.7,567.2 483.3,565.9 483.9,562.8 484.5,560.7 485.1,552.9 485.7,546.0 486.3,549.7 486.9,543.8 487.6,541.3 488.2,543.5 488.8,551.3 489.4,553.5 490.0,551.9 490.6,555.3 491.2,559.6 491.8,556.8 492.4,552.6 493.0,552.0 493.6,550.9 494.2,550.7 494.8,550.2 495.4,547.9 496.0,550.5 496.6,551.1 497.2,553.4 497.8,554.1 498.4,552.1 499.1,551.5 499.7,550.3 500.3,550.7 500.9,552.2 501.5,554.6 502.1,554.9 502.7,554.2 503.3,553.3 503.9,551.7 504.5,549.9 505.1,548.9 505.7,548.8 506.3,548.6 506.9,550.9 507.5,552.8 508.1,554.5 508.7,555.5 509.3,555.1 509.9,552.9 510.6,551.5 511.2,549.9 511.8,549.2 512.4,549.1 513.0,549.6 513.6,550.6 514.2,552.5 514.8,553.7 515.4,554.9 516.0,555.1 516.6,555.0 517.2,553.8 517.8,553.2 518.4,552.8 519.0,551.7 519.6,551.0 520.2,550.1 520.8,549.2 521.4,548.7 522.1,549.7 522.7,551.8 523.3,554.2 523.9,554.3 524.5,554.1 525.1,551.9 525.7,553.5 526.3,554.5 526.9,552.9 527.5,552.3 528.1,551.8 528.7,552.0 529.3,552.5 529.9,552.0 530.5,552.3 531.1,551.2 531.7,549.1 532.3,546.9 532.9,544.5 533.6,543.1 534.2,542.6 534.8,542.0 535.4,543.1 536.0,545.4 536.6,548.4 537.2,553.2 537.8,557.0 538.4,559.2 539.0,559.4 539.6,557.5 540.2,554.0 540.8,552.6 541.4,548.9 542.0,544.6 542.6,541.3 543.2,542.0 543.8,544.6 544.4,549.6 545.0,555.1 545.7,558.6 546.3,560.1 546.9,561.2 547.5,559.5 548.1,556.6 548.7,553.4 549.3,551.3 549.9,551.7 550.5,551.3 551.1,550.5 551.7,551.8 552.3,551.9 552.9,552.3 553.5,553.4 554.1,553.9 554.7,554.2 555.3,554.9 555.9,554.6 556.5,554.3 557.2,552.2 557.8,551.0 558.4,552.1 559.0,551.9 559.6,550.6 560.2,550.0 560.8,550.1 561.4,549.7 562.0,549.3 562.6,549.9 563.2,550.6 563.8,552.1 564.4,552.9 565.0,555.5 565.6,556.6 566.2,555.6 566.8,554.3 567.4,552.8 568.0,550.4 568.7,548.6 569.3,549.0 569.9,550.0 570.5,551.1 571.1,553.0 571.7,554.0 572.3,552.8 572.9,551.3 573.5,551.1 574.1,551.7 574.7,551.3 575.3,551.5 575.9,551.9 576.5,551.8 577.1,553.0 577.7,553.4 578.3,553.7 578.9,551.0 579.5,550.9 580.2,554.5 580.8,555.5 581.4,554.1 582.0,552.5 582.6,552.0 583.2,551.0 583.8,548.7 584.4,547.6 585.0,547.2 585.6,548.3 586.2,550.6 586.8,553.1 587.4,554.8 588.0,555.6 588.6,555.8 589.2,554.2 589.8,551.4 590.4,549.7 591.0,548.1 591.7,551.1 592.3,552.9 592.9,553.1 593.5,552.0 594.1,552.0 594.7,552.3 595.3,553.4 595.9,553.4 596.5,552.3 597.1,552.9 597.7,552.7 598.3,551.7 598.9,552.0 599.5,551.4 600.1,549.3 600.7,548.3 601.3,549.9 601.9,551.7 602.5,552.6 603.2,554.4 603.8,553.2 604.4,553.7 605.0,554.1 605.6,554.2 606.2,554.1 606.8,552.5 607.4,551.9 608.0,551.6 608.6,550.2 609.2,550.4 609.8,551.0 610.4,550.1 611.0,550.7 611.6,552.3 612.2,552.7 612.8,554.6 613.4,556.3 614.0,555.1 614.7,552.9 615.3,551.5 615.9,550.4 616.5,548.9 617.1,549.3 617.7,549.1 618.3,549.1 618.9,551.1 619.5,552.8 620.1,553.8 620.7,553.7 621.3,552.9 621.9,553.2 622.5,552.4 623.1,550.1 623.7,550.3 624.3,550.4 624.9,550.8 625.5,551.1 626.2,551.6 626.8,551.7 627.4,550.8 628.0,552.0 628.6,552.6 629.2,551.9 629.8,552.2 630.4,551.9 631.0,551.0 631.6,551.9 632.2,555.6 632.8,552.7 633.4,551.3 634.0,550.3 634.6,550.1 635.2,552.4 635.8,550.1 636.4,549.1 637.0,548.8 637.7,547.7 638.3,552.8 638.9,548.9 639.5,550.8 640.1,556.1 640.7,555.8 641.3,553.9 641.9,550.6 642.5,556.2 643.1,556.1 643.7,547.9 644.3,551.6 644.9,559.4 645.5,553.4 646.1,544.5 646.7,553.2 647.3,553.8 647.9,546.8 648.5,550.6 649.2,555.1 649.8,551.1 650.4,552.6 651.0,552.6 651.6,551.0 652.2,550.1 652.8,551.4 653.4,551.1 654.0,551.5 654.6,551.5 655.2,552.3 655.8,554.5 656.4,556.1 657.0,555.0 657.6,552.7 658.2,551.8 658.8,549.7 659.4,548.9 660.0,549.4 660.7,551.1 661.3,550.7 661.9,551.3 662.5,550.8 663.1,550.0 663.7,551.0 664.3,551.1 664.9,551.2 665.5,551.8 666.1,552.5 666.7,553.3 667.3,555.3 667.9,554.4 668.5,553.6 669.1,551.2 669.7,549.9 670.3,550.7 670.9,551.2 671.5,551.8 672.2,551.4 672.8,550.1 673.4,549.2 674.0,549.8 674.6,552.1 675.2,551.7 675.8,551.3 676.4,552.6 677.0,554.9 677.6,555.6 678.2,555.8 678.8,554.3 679.4,552.1 680.0,549.0 680.6,548.0 681.2,549.6 681.8,550.9 682.4,552.2 683.0,554.6 683.7,554.1 684.3,552.4 684.9,551.7 685.5,551.0 686.1,551.2 686.7,550.9 687.3,550.6 687.9,550.8 688.5,551.7 689.1,554.2 689.7,554.4 690.3,552.5 690.9,551.3 691.5,552.8 692.1,552.8 692.7,551.5 693.3,553.1 693.9,551.7 694.5,550.7 695.2,550.9 695.8,551.9 696.4,552.3 697.0,551.8 697.6,553.1 698.2,552.9 698.8,553.1 699.4,554.3 700.0,554.1 700.6,551.3 701.2,548.9 701.8,549.3 702.4,551.0 703.0,549.9 703.6,550.5 704.2,551.5 704.8,553.8 705.4,554.5 706.0,553.9 706.7,551.4 707.3,551.9 707.9,553.9 708.5,549.8 709.1,545.7 709.7,551.3 710.3,551.6 710.9,550.8 711.5,554.1 712.1,550.4 712.7,547.9 713.3,550.5 713.9,551.0 714.5,553.1 715.1,554.0 715.7,552.9 716.3,553.4 716.9,552.8 717.5,552.6 718.2,553.1 718.8,553.2 719.4,552.1 720.0,551.8 720.6,551.4 721.2,551.5 721.8,550.9 722.4,551.3 723.0,551.1 723.6,550.5 724.2,550.8 724.8,552.0 725.4,552.7 726.0,552.8 726.6,552.1 727.2,551.7 727.8,551.9 728.4,553.9 729.0,554.8 729.7,554.6 730.3,553.4 730.9,551.0 731.5,550.8 732.1,551.1 732.7,549.2 733.3,548.9 733.9,549.1 734.5,550.0 735.1,551.1 735.7,552.2 736.3,552.5 736.9,553.3 737.5,554.6 738.1,555.0 738.7,554.0 739.3,553.9 739.9,552.4 740.5,551.3 741.2,549.3 741.8,547.2 742.4,548.2 743.0,549.7 743.6,552.1 744.2,553.8 744.8,554.5 745.4,553.4 746.0,553.9 746.6,553.3 747.2,551.6 747.8,550.5 748.4,550.3 749.0,551.1 749.6,552.6 750.2,552.8 750.8,552.3 751.4,552.6 752.0,553.0 752.7,551.7 753.3,551.6 753.9,552.5 754.5,552.3 755.1,552.1 755.7,552.4 756.3,553.7 756.9,552.1 757.5,551.8 758.1,551.9 758.7,551.1 759.3,551.6 759.9,552.5 760.5,553.0 761.1,552.8 761.7,552.1 762.3,552.6 762.9,552.1 763.5,551.2 764.2,548.5 764.8,549.3 765.4,551.0 766.0,550.5 766.6,546.0 767.2,551.4 767.8,554.6 768.4,553.5 769.0,556.6 769.6,557.2 770.2,554.6 770.8,551.0 771.4,550.2 772.0,549.4 772.6,550.1 773.2,549.9 773.8,547.8 774.4,550.2 775.0,550.2 775.7,548.3 776.3,553.0 776.9,563.0 777.5,563.9 778.1,563.2 778.7,553.7 779.3,553.1 779.9,554.2 780.5,554.3 781.1,554.8 781.7,549.6 782.3,545.7 782.9,544.4 783.5,545.4 784.1,553.1 784.7,549.0 785.3,547.5 785.9,550.3 786.5,553.8 787.1,554.1 787.8,551.8 788.4,551.2 789.0,557.1 789.6,557.8 790.2,558.0 790.8,560.0 791.4,553.3 792.0,550.4 792.6,551.2 793.2,554.6 793.8,553.0 794.4,554.4 795.0,552.4 795.6,553.4 796.2,552.5 796.8,550.3 797.4,550.1 798.0,547.7 798.6,546.9"/>
<rect x="181.20" y="468.10" width="619.40" height="142.30" fill="none" stroke="#828282" stroke-width="1.8"/>
<rect x="693.60" y="478.75" width="14.6" height="10.4" fill="#fffff4" stroke="#ccc" stroke-width="1"/>
<rect x="695.00" y="480.00" width="12" height="8" fill="#0000ff"/>
<path d="M799.10 458.05L810.10 469.05L799.10 480.05L788.10 469.05Z" fill="#ff0000"/>
</svg>
<div class="yl" style="left:139.70px;top:462.70px">9000</div>
<div class="yl" style="left:139.70px;top:497.75px">8500</div>
<div class="yl" style="left:139.70px;top:532.80px">8000</div>
<div class="yl" style="left:139.70px;top:567.85px">7500</div>
<div class="yl" style="left:139.70px;top:602.90px">7000</div>
<div class="xl" style="left:161.20px;top:613.80px">0</div>
<div class="xl" style="left:221.73px;top:613.80px">100</div>
<div class="xl" style="left:282.25px;top:613.80px">200</div>
<div class="xl" style="left:342.77px;top:613.80px">300</div>
<div class="xl" style="left:403.30px;top:613.80px">400</div>
<div class="xl" style="left:463.82px;top:613.80px">500</div>
<div class="xl" style="left:524.35px;top:613.80px">600</div>
<div class="xl" style="left:584.88px;top:613.80px">700</div>
<div class="xl" style="left:645.40px;top:613.80px">800</div>
<div class="xl" style="left:705.92px;top:613.80px">900</div>
<div class="xl" style="left:766.45px;top:613.80px">1000</div>
<div class="lgt" style="left:711.90px;top:476.50px;color:#8e8e8e">aida05 1.8.W</div>
<svg style="left:1122px;top:453px" width="640" height="172" viewBox="1122 453 640 172">
<rect x="1127.20" y="468.10" width="619.40" height="142.30" fill="#fff" stroke="none"/>
<line x1="1188.42" y1="469.00" x2="1188.42" y2="609.50" stroke="rgba(84,84,84,0.13)" stroke-width="1.1"/>
<line x1="1248.95" y1="469.00" x2="1248.95" y2="609.50" stroke="rgba(84,84,84,0.13)" stroke-width="1.1"/>
<line x1="1309.47" y1="469.00" x2="1309.47" y2="609.50" stroke="rgba(84,84,84,0.13)" stroke-width="1.1"/>
<line x1="1370.00" y1="469.00" x2="1370.00" y2="609.50" stroke="rgba(84,84,84,0.13)" stroke-width="1.1"/>
<line x1="1430.52" y1="469.00" x2="1430.52" y2="609.50" stroke="rgba(84,84,84,0.13)" stroke-width="1.1"/>
<line x1="1491.05" y1="469.00" x2="1491.05" y2="609.50" stroke="rgba(84,84,84,0.13)" stroke-width="1.1"/>
<line x1="1551.57" y1="469.00" x2="1551.57" y2="609.50" stroke="rgba(84,84,84,0.13)" stroke-width="1.1"/>
<line x1="1612.10" y1="469.00" x2="1612.10" y2="609.50" stroke="rgba(84,84,84,0.13)" stroke-width="1.1"/>
<line x1="1672.62" y1="469.00" x2="1672.62" y2="609.50" stroke="rgba(84,84,84,0.13)" stroke-width="1.1"/>
<line x1="1733.15" y1="469.00" x2="1733.15" y2="609.50" stroke="rgba(84,84,84,0.13)" stroke-width="1.1"/>
<line x1="1128.10" y1="504.95" x2="1745.70" y2="504.95" stroke="rgba(84,84,84,0.13)" stroke-width="1.1"/>
<line x1="1128.10" y1="540.00" x2="1745.70" y2="540.00" stroke="rgba(84,84,84,0.13)" stroke-width="1.1"/>
<line x1="1128.10" y1="575.05" x2="1745.70" y2="575.05" stroke="rgba(84,84,84,0.13)" stroke-width="1.1"/>
<polyline fill="none" stroke="#3838ff" stroke-width="1.3" stroke-linejoin="round" points="1127.9,544.6 1128.5,546.7 1129.1,544.7 1129.7,544.2 1130.3,546.8 1130.9,547.8 1131.5,543.5 1132.1,543.3 1132.7,546.9 1133.3,549.2 1134.0,548.1 1134.6,545.4 1135.2,543.6 1135.8,546.2 1136.4,545.6 1137.0,544.7 1137.6,545.2 1138.2,544.5 1138.8,548.0 1139.4,547.7 1140.0,546.7 1140.6,547.2 1141.2,548.7 1141.8,550.5 1142.4,551.8 1143.0,549.7 1143.6,548.9 1144.2,547.6 1144.8,546.6 1145.5,546.8 1146.1,546.0 1146.7,547.7 1147.3,548.7 1147.9,548.9 1148.5,548.9 1149.1,549.5 1149.7,550.5 1150.3,550.2 1150.9,548.7 1151.5,544.5 1152.1,545.8 1152.7,548.2 1153.3,549.4 1153.9,549.7 1154.5,548.2 1155.1,547.3 1155.7,546.5 1156.3,549.8 1157.0,552.0 1157.6,550.6 1158.2,545.6 1158.8,547.7 1159.4,548.6 1160.0,548.1 1160.6,547.6 1161.2,543.5 1161.8,547.0 1162.4,547.9 1163.0,549.8 1163.6,550.5 1164.2,548.9 1164.8,549.3 1165.4,548.8 1166.0,551.5 1166.6,548.5 1167.2,545.6 1167.8,547.0 1168.5,550.8 1169.1,549.3 1169.7,546.0 1170.3,547.0 1170.9,548.8 1171.5,548.3 1172.1,548.7 1172.7,549.2 1173.3,547.3 1173.9,545.3 1174.5,545.1 1175.1,545.0 1175.7,547.9 1176.3,548.9 1176.9,549.6 1177.5,549.5 1178.1,551.2 1178.7,549.8 1179.3,545.7 1180.0,544.6 1180.6,544.5 1181.2,544.3 1181.8,546.2 1182.4,547.1 1183.0,547.0 1183.6,548.8 1184.2,550.7 1184.8,551.5 1185.4,549.9 1186.0,547.5 1186.6,547.4 1187.2,546.6 1187.8,544.9 1188.4,546.2 1189.0,545.0 1189.6,545.5 1190.2,549.0 1190.8,548.8 1191.5,546.9 1192.1,548.1 1192.7,546.6 1193.3,547.3 1193.9,546.1 1194.5,548.0 1195.1,549.5 1195.7,546.6 1196.3,549.0 1196.9,549.2 1197.5,547.8 1198.1,545.5 1198.7,545.0 1199.3,547.2 1199.9,551.1 1200.5,551.6 1201.1,553.2 1201.7,548.7 1202.3,548.9 1203.0,550.5 1203.6,548.7 1204.2,548.0 1204.8,548.6 1205.4,552.4 1206.0,551.8 1206.6,547.6 1207.2,541.8 1207.8,544.9 1208.4,548.0 1209.0,548.4 1209.6,549.7 1210.2,551.0 1210.8,552.7 1211.4,554.5 1212.0,555.7 1212.6,549.4 1213.2,543.3 1213.8,546.4 1214.5,547.5 1215.1,547.6 1215.7,546.6 1216.3,548.5 1216.9,551.8 1217.5,550.5 1218.1,553.3 1218.7,556.8 1219.3,556.6 1219.9,556.0 1220.5,550.8 1221.1,548.5 1221.7,553.9 1222.3,547.4 1222.9,548.9 1223.5,548.7 1224.1,546.0 1224.7,545.5 1225.3,549.3 1226.0,550.6 1226.6,550.9 1227.2,547.8 1227.8,547.0 1228.4,551.4 1229.0,553.0 1229.6,552.1 1230.2,551.0 1230.8,547.5 1231.4,542.4 1232.0,545.1 1232.6,544.8 1233.2,544.2 1233.8,547.3 1234.4,544.7 1235.0,547.4 1235.6,552.1 1236.2,551.6 1236.8,548.3 1237.5,544.2 1238.1,545.1 1238.7,546.4 1239.3,544.1 1239.9,546.7 1240.5,547.6 1241.1,548.2 1241.7,548.9 1242.3,549.1 1242.9,546.3 1243.5,541.1 1244.1,533.3 1244.7,528.6 1245.3,531.9 1245.9,541.6 1246.5,552.7 1247.1,564.5 1247.7,575.4 1248.3,579.8 1248.9,575.8 1249.6,565.5 1250.2,555.1 1250.8,548.8 1251.4,546.3 1252.0,545.8 1252.6,545.7 1253.2,543.9 1253.8,540.5 1254.4,537.5 1255.0,536.9 1255.6,539.9 1256.2,543.9 1256.8,547.0 1257.4,550.8 1258.0,554.2 1258.6,558.0 1259.2,558.3 1259.8,559.6 1260.4,560.1 1261.1,556.3 1261.7,555.5 1262.3,552.9 1262.9,552.0 1263.5,549.9 1264.1,549.2 1264.7,549.5 1265.3,548.2 1265.9,551.4 1266.5,550.1 1267.1,549.2 1267.7,551.6 1268.3,550.1 1268.9,548.4 1269.5,550.5 1270.1,552.8 1270.7,547.4 1271.3,544.9 1271.9,546.3 1272.6,548.2 1273.2,548.1 1273.8,548.2 1274.4,548.9 1275.0,547.8 1275.6,548.1 1276.2,547.2 1276.8,546.4 1277.4,549.5 1278.0,548.8 1278.6,546.2 1279.2,548.9 1279.8,547.6 1280.4,547.5 1281.0,548.6 1281.6,548.9 1282.2,545.1 1282.8,543.2 1283.4,547.2 1284.1,545.2 1284.7,543.5 1285.3,544.3 1285.9,544.5 1286.5,547.4 1287.1,551.8 1287.7,549.4 1288.3,547.7 1288.9,546.3 1289.5,545.5 1290.1,547.2 1290.7,547.7 1291.3,547.4 1291.9,547.7 1292.5,547.0 1293.1,547.8 1293.7,550.7 1294.3,552.0 1294.9,550.4 1295.6,547.0 1296.2,547.5 1296.8,548.6 1297.4,548.8 1298.0,549.1 1298.6,549.2 1299.2,549.2 1299.8,551.5 1300.4,551.0 1301.0,551.3 1301.6,550.6 1302.2,553.2 1302.8,551.8 1303.4,549.7 1304.0,550.2 1304.6,555.0 1305.2,553.4 1305.8,551.9 1306.4,553.8 1307.1,551.2 1307.7,552.4 1308.3,553.2 1308.9,553.9 1309.5,550.0 1310.1,553.1 1310.7,550.3 1311.3,545.4 1311.9,544.9 1312.5,542.7 1313.1,550.6 1313.7,551.7 1314.3,548.6 1314.9,546.6 1315.5,548.7 1316.1,546.8 1316.7,547.8 1317.3,549.6 1317.9,548.4 1318.6,551.4 1319.2,551.3 1319.8,547.4 1320.4,548.9 1321.0,551.1 1321.6,553.8 1322.2,551.9 1322.8,545.8 1323.4,548.1 1324.0,549.3 1324.6,547.5 1325.2,549.4 1325.8,546.5 1326.4,546.7 1327.0,547.4 1327.6,548.5 1328.2,550.5 1328.8,552.1 1329.4,549.4 1330.1,548.1 1330.7,546.0 1331.3,544.5 1331.9,543.4 1332.5,547.8 1333.1,554.7 1333.7,549.0 1334.3,546.7 1334.9,542.1 1335.5,547.9 1336.1,551.2 1336.7,548.4 1337.3,549.1 1337.9,548.6 1338.5,551.9 1339.1,549.7 1339.7,549.9 1340.3,551.0 1340.9,554.2 1341.6,554.5 1342.2,548.8 1342.8,548.5 1343.4,551.7 1344.0,552.5 1344.6,550.0 1345.2,550.7 1345.8,552.4 1346.4,550.3 1347.0,550.0 1347.6,554.4 1348.2,555.0 1348.8,556.8 1349.4,554.6 1350.0,554.9 1350.6,554.5 1351.2,550.3 1351.8,547.0 1352.4,550.9 1353.1,548.4 1353.7,546.9 1354.3,553.7 1354.9,554.9 1355.5,552.0 1356.1,551.6 1356.7,549.4 1357.3,554.0 1357.9,553.6 1358.5,553.4 1359.1,551.0 1359.7,551.9 1360.3,550.3 1360.9,551.1 1361.5,549.8 1362.1,546.8 1362.7,547.6 1363.3,550.1 1363.9,551.9 1364.6,550.7 1365.2,545.8 1365.8,544.5 1366.4,549.5 1367.0,549.9 1367.6,550.2 1368.2,551.2 1368.8,550.7 1369.4,548.1 1370.0,546.7 1370.6,549.6 1371.2,551.3 1371.8,551.2 1372.4,548.2 1373.0,549.6 1373.6,551.2 1374.2,549.7 1374.8,546.8 1375.4,545.6 1376.1,547.0 1376.7,548.9 1377.3,549.7 1377.9,549.3 1378.5,547.9 1379.1,547.3 1379.7,551.9 1380.3,549.3 1380.9,548.1 1381.5,549.2 1382.1,547.8 1382.7,550.0 1383.3,550.3 1383.9,552.3 1384.5,554.0 1385.1,551.0 1385.7,547.5 1386.3,549.8 1386.9,549.4 1387.6,549.0 1388.2,549.3 1388.8,550.0 1389.4,552.2 1390.0,551.3 1390.6,550.5 1391.2,553.3 1391.8,553.8 1392.4,552.4 1393.0,552.1 1393.6,551.5 1394.2,553.8 1394.8,553.6 1395.4,550.5 1396.0,548.9 1396.6,551.3 1397.2,551.2 1397.8,551.3 1398.4,550.1 1399.1,548.3 1399.7,550.2 1400.3,552.5 1400.9,548.5 1401.5,550.9 1402.1,548.2 1402.7,545.2 1403.3,547.2 1403.9,544.1 1404.5,548.4 1405.1,551.4 1405.7,548.8 1406.3,549.5 1406.9,553.5 1407.5,555.1 1408.1,550.1 1408.7,550.3 1409.3,548.6 1409.9,544.7 1410.6,549.6 1411.2,550.1 1411.8,550.8 1412.4,552.3 1413.0,551.3 1413.6,548.9 1414.2,549.1 1414.8,550.1 1415.4,550.4 1416.0,550.8 1416.6,547.9 1417.2,550.3 1417.8,550.5 1418.4,556.3 1419.0,560.7 1419.6,565.2 1420.2,559.9 1420.8,547.4 1421.4,551.6 1422.1,551.9 1422.7,549.8 1423.3,543.4 1423.9,546.0 1424.5,552.4 1425.1,556.3 1425.7,551.9 1426.3,550.2 1426.9,554.4 1427.5,556.4 1428.1,556.0 1428.7,553.9 1429.3,553.0 1429.9,554.0 1430.5,547.3 1431.1,540.8 1431.7,549.1 1432.3,556.1 1432.9,552.8 1433.6,553.8 1434.2,551.6 1434.8,549.1 1435.4,552.2 1436.0,552.1 1436.6,552.3 1437.2,550.1 1437.8,547.5 1438.4,552.5 1439.0,556.9 1439.6,554.8 1440.2,553.5 1440.8,550.3 1441.4,551.0 1442.0,549.8 1442.6,553.5 1443.2,553.1 1443.8,546.2 1444.4,546.4 1445.1,549.3 1445.7,553.5 1446.3,552.6 1446.9,555.1 1447.5,553.6 1448.1,550.6 1448.7,551.4 1449.3,554.3 1449.9,556.1 1450.5,554.5 1451.1,547.5 1451.7,544.8 1452.3,549.9 1452.9,553.7 1453.5,552.5 1454.1,554.0 1454.7,552.9 1455.3,546.0 1455.9,542.9 1456.6,552.4 1457.2,561.2 1457.8,557.9 1458.4,553.2 1459.0,550.7 1459.6,549.1 1460.2,549.0 1460.8,546.9 1461.4,546.1 1462.0,548.1 1462.6,549.8 1463.2,552.6 1463.8,553.9 1464.4,551.4 1465.0,551.6 1465.6,551.7 1466.2,549.2 1466.8,550.7 1467.4,550.2 1468.1,552.3 1468.7,551.5 1469.3,549.7 1469.9,553.0 1470.5,551.4 1471.1,553.1 1471.7,553.2 1472.3,555.0 1472.9,554.0 1473.5,551.5 1474.1,552.1 1474.7,554.7 1475.3,552.2 1475.9,551.8 1476.5,552.9 1477.1,552.3 1477.7,553.4 1478.3,551.7 1478.9,551.3 1479.6,551.0 1480.2,553.6 1480.8,554.8 1481.4,553.9 1482.0,554.9 1482.6,551.5 1483.2,550.6 1483.8,552.1 1484.4,551.9 1485.0,549.9 1485.6,552.2 1486.2,553.3 1486.8,550.4 1487.4,549.2 1488.0,551.3 1488.6,551.3 1489.2,553.4 1489.8,554.6 1490.4,552.2 1491.0,550.5 1491.7,550.3 1492.3,551.6 1492.9,551.1 1493.5,546.2 1494.1,546.5 1494.7,545.8 1495.3,546.9 1495.9,550.0 1496.5,550.1 1497.1,548.3 1497.7,549.4 1498.3,553.2 1498.9,551.1 1499.5,550.0 1500.1,546.5 1500.7,546.0 1501.3,549.2 1501.9,549.7 1502.5,548.4 1503.2,550.7 1503.8,551.3 1504.4,549.4 1505.0,550.9 1505.6,550.8 1506.2,551.4 1506.8,549.3 1507.4,550.8 1508.0,549.3 1508.6,551.6 1509.2,548.8 1509.8,553.5 1510.4,554.8 1511.0,552.4 1511.6,552.7 1512.2,554.4 1512.8,552.9 1513.4,552.1 1514.0,555.7 1514.7,558.2 1515.3,553.0 1515.9,551.9 1516.5,551.6 1517.1,552.3 1517.7,552.2 1518.3,548.3 1518.9,551.7 1519.5,551.8 1520.1,550.8 1520.7,552.3 1521.3,554.9 1521.9,554.7 1522.5,552.4 1523.1,555.6 1523.7,558.9 1524.3,556.0 1524.9,553.6 1525.5,554.1 1526.2,553.0 1526.8,552.1 1527.4,550.9 1528.0,550.0 1528.6,553.9 1529.2,553.0 1529.8,551.5 1530.4,550.7 1531.0,549.7 1531.6,550.3 1532.2,552.2 1532.8,549.9 1533.4,552.9 1534.0,554.4 1534.6,549.6 1535.2,545.9 1535.8,549.2 1536.4,553.8 1537.0,556.1 1537.7,553.2 1538.3,552.3 1538.9,547.9 1539.5,544.6 1540.1,547.8 1540.7,550.1 1541.3,553.2 1541.9,552.9 1542.5,551.1 1543.1,547.3 1543.7,543.6 1544.3,550.4 1544.9,549.1 1545.5,547.1 1546.1,550.9 1546.7,550.5 1547.3,546.7 1547.9,550.6 1548.5,550.8 1549.2,548.1 1549.8,549.8 1550.4,551.4 1551.0,549.9 1551.6,551.7 1552.2,556.1 1552.8,558.4 1553.4,556.0 1554.0,549.4 1554.6,546.5 1555.2,546.2 1555.8,544.7 1556.4,546.0 1557.0,549.2 1557.6,551.0 1558.2,554.9 1558.8,551.9 1559.4,554.0 1560.0,555.9 1560.7,557.4 1561.3,556.8 1561.9,552.2 1562.5,550.7 1563.1,552.1 1563.7,551.3 1564.3,552.9 1564.9,553.3 1565.5,555.2 1566.1,554.1 1566.7,555.3 1567.3,555.6 1567.9,558.1 1568.5,558.0 1569.1,554.4 1569.7,550.4 1570.3,550.5 1570.9,552.3 1571.5,550.0 1572.2,550.8 1572.8,554.2 1573.4,556.6 1574.0,554.8 1574.6,555.0 1575.2,551.2 1575.8,551.9 1576.4,555.4 1577.0,558.0 1577.6,551.9 1578.2,553.2 1578.8,553.6 1579.4,549.5 1580.0,550.8 1580.6,551.8 1581.2,553.7 1581.8,554.3 1582.4,550.3 1583.0,547.0 1583.7,551.8 1584.3,552.2 1584.9,553.3 1585.5,553.0 1586.1,553.0 1586.7,551.7 1587.3,549.4 1587.9,550.1 1588.5,550.1 1589.1,551.7 1589.7,549.5 1590.3,550.7 1590.9,550.2 1591.5,552.0 1592.1,551.1 1592.7,549.0 1593.3,551.5 1593.9,551.9 1594.5,552.4 1595.2,551.2 1595.8,551.5 1596.4,550.1 1597.0,550.8 1597.6,553.0 1598.2,552.6 1598.8,549.5 1599.4,549.3 1600.0,551.6 1600.6,553.4 1601.2,551.3 1601.8,552.0 1602.4,552.1 1603.0,552.4 1603.6,552.8 1604.2,551.0 1604.8,550.8 1605.4,553.6 1606.0,554.0 1606.7,551.9 1607.3,553.6 1607.9,556.3 1608.5,554.0 1609.1,553.2 1609.7,554.2 1610.3,554.8 1610.9,554.6 1611.5,550.1 1612.1,550.4 1612.7,554.0 1613.3,555.5 1613.9,554.7 1614.5,552.3 1615.1,554.2 1615.7,553.8 1616.3,551.2 1616.9,552.2 1617.5,554.8 1618.2,556.9 1618.8,553.3 1619.4,553.2 1620.0,553.7 1620.6,549.7 1621.2,549.6 1621.8,552.4 1622.4,555.6 1623.0,554.3 1623.6,551.5 1624.2,551.0 1624.8,550.5 1625.4,551.7 1626.0,554.0 1626.6,555.7 1627.2,555.4 1627.8,549.3 1628.4,549.6 1629.0,554.8 1629.7,554.1 1630.3,552.4 1630.9,554.0 1631.5,555.5 1632.1,553.9 1632.7,551.2 1633.3,548.6 1633.9,552.9 1634.5,549.6 1635.1,548.1 1635.7,548.7 1636.3,549.2 1636.9,551.7 1637.5,556.1 1638.1,554.4 1638.7,554.1 1639.3,549.3 1639.9,547.8 1640.5,554.2 1641.2,552.1 1641.8,553.7 1642.4,548.9 1643.0,551.5 1643.6,552.2 1644.2,548.6 1644.8,551.2 1645.4,549.3 1646.0,552.2 1646.6,553.4 1647.2,552.0 1647.8,549.9 1648.4,548.8 1649.0,547.6 1649.6,546.5 1650.2,554.2 1650.8,555.9 1651.4,556.7 1652.0,557.5 1652.7,558.1 1653.3,553.8 1653.9,549.8 1654.5,552.1 1655.1,551.7 1655.7,549.0 1656.3,547.7 1656.9,548.8 1657.5,550.7 1658.1,554.2 1658.7,554.3 1659.3,554.6 1659.9,553.7 1660.5,555.0 1661.1,553.5 1661.7,553.1 1662.3,553.5 1662.9,554.3 1663.5,552.4 1664.2,550.3 1664.8,556.7 1665.4,557.0 1666.0,555.5 1666.6,558.8 1667.2,556.1 1667.8,555.0 1668.4,562.8 1669.0,561.8 1669.6,550.0 1670.2,550.4 1670.8,552.7 1671.4,544.9 1672.0,548.2 1672.6,560.1 1673.2,563.6 1673.8,571.1 1674.4,575.5 1675.0,569.0 1675.7,550.0 1676.3,546.0 1676.9,547.4 1677.5,556.4 1678.1,560.6 1678.7,557.5 1679.3,559.1 1679.9,556.7 1680.5,558.7 1681.1,557.3 1681.7,555.6 1682.3,552.4 1682.9,554.4 1683.5,556.8 1684.1,550.9 1684.7,548.2 1685.3,553.5 1685.9,557.1 1686.5,556.5 1687.2,555.2 1687.8,552.4 1688.4,553.4 1689.0,548.9 1689.6,549.1 1690.2,558.3 1690.8,558.7 1691.4,560.7 1692.0,556.9 1692.6,551.3 1693.2,550.7 1693.8,552.1 1694.4,559.1 1695.0,552.6 1695.6,546.9 1696.2,547.5 1696.8,547.6 1697.4,548.8 1698.0,551.1 1698.7,551.6 1699.3,550.8 1699.9,550.4 1700.5,552.0 1701.1,549.3 1701.7,549.6 1702.3,554.5 1702.9,551.8 1703.5,549.9 1704.1,551.7 1704.7,549.1 1705.3,546.7 1705.9,551.2 1706.5,551.1 1707.1,546.4 1707.7,547.5 1708.3,554.0 1708.9,552.4 1709.5,551.9 1710.2,550.6 1710.8,547.2 1711.4,551.4 1712.0,552.6 1712.6,552.8 1713.2,555.5 1713.8,554.9 1714.4,551.5 1715.0,551.8 1715.6,556.9 1716.2,551.5 1716.8,551.0 1717.4,551.6 1718.0,551.7 1718.6,554.7 1719.2,555.3 1719.8,556.2 1720.4,555.2 1721.0,554.1 1721.7,558.0 1722.3,557.2 1722.9,558.1 1723.5,559.4 1724.1,559.7 1724.7,556.4 1725.3,556.0 1725.9,556.1 1726.5,556.5 1727.1,558.5 1727.7,558.3 1728.3,556.3 1728.9,556.7 1729.5,559.4 1730.1,560.0 1730.7,557.7 1731.3,554.6 1731.9,555.8 1732.5,557.2 1733.1,555.0 1733.8,553.6 1734.4,554.4 1735.0,556.8 1735.6,554.8 1736.2,551.5 1736.8,550.5 1737.4,553.5 1738.0,555.7 1738.6,553.8 1739.2,554.1 1739.8,553.7 1740.4,553.9 1741.0,553.1 1741.6,551.3 1742.2,550.1 1742.8,552.0 1743.4,552.6 1744.0,553.2 1744.6,553.0"/>
<rect x="1127.20" y="468.10" width="619.40" height="142.30" fill="none" stroke="#828282" stroke-width="1.8"/>
<rect x="1639.60" y="478.75" width="14.6" height="10.4" fill="#fffff4" stroke="#ccc" stroke-width="1"/>
<rect x="1641.00" y="480.00" width="12" height="8" fill="#0000ff"/>
<path d="M1745.10 458.05L1756.10 469.05L1745.10 480.05L1734.10 469.05Z" fill="#ff0000"/>
</svg>
<div class="yl" style="left:1085.70px;top:462.70px">9000</div>
<div class="yl" style="left:1085.70px;top:497.75px">8500</div>
<div class="yl" style="left:1085.70px;top:532.80px">8000</div>
<div class="yl" style="left:1085.70px;top:567.85px">7500</div>
<div class="yl" style="left:1085.70px;top:602.90px">7000</div>
<div class="xl" style="left:1107.20px;top:613.80px">0</div>
<div class="xl" style="left:1167.73px;top:613.80px">100</div>
<div class="xl" style="left:1228.25px;top:613.80px">200</div>
<div class="xl" style="left:1288.78px;top:613.80px">300</div>
<div class="xl" style="left:1349.30px;top:613.80px">400</div>
<div class="xl" style="left:1409.83px;top:613.80px">500</div>
<div class="xl" style="left:1470.35px;top:613.80px">600</div>
<div class="xl" style="left:1530.88px;top:613.80px">700</div>
<div class="xl" style="left:1591.40px;top:613.80px">800</div>
<div class="xl" style="left:1651.93px;top:613.80px">900</div>
<div class="xl" style="left:1712.45px;top:613.80px">1000</div>
<div class="lgt" style="left:1657.90px;top:476.50px;color:#8e8e8e">aida01 3.8.W</div>
<svg style="left:176px;top:635px" width="640" height="172" viewBox="176 635 640 172">
<rect x="181.20" y="650.10" width="619.40" height="142.30" fill="#fff" stroke="none"/>
<line x1="242.43" y1="651.00" x2="242.43" y2="791.50" stroke="rgba(84,84,84,0.13)" stroke-width="1.1"/>
<line x1="302.95" y1="651.00" x2="302.95" y2="791.50" stroke="rgba(84,84,84,0.13)" stroke-width="1.1"/>
<line x1="363.48" y1="651.00" x2="363.48" y2="791.50" stroke="rgba(84,84,84,0.13)" stroke-width="1.1"/>
<line x1="424.00" y1="651.00" x2="424.00" y2="791.50" stroke="rgba(84,84,84,0.13)" stroke-width="1.1"/>
<line x1="484.52" y1="651.00" x2="484.52" y2="791.50" stroke="rgba(84,84,84,0.13)" stroke-width="1.1"/>
<line x1="545.05" y1="651.00" x2="545.05" y2="791.50" stroke="rgba(84,84,84,0.13)" stroke-width="1.1"/>
<line x1="605.58" y1="651.00" x2="605.58" y2="791.50" stroke="rgba(84,84,84,0.13)" stroke-width="1.1"/>
<line x1="666.10" y1="651.00" x2="666.10" y2="791.50" stroke="rgba(84,84,84,0.13)" stroke-width="1.1"/>
<line x1="726.62" y1="651.00" x2="726.62" y2="791.50" stroke="rgba(84,84,84,0.13)" stroke-width="1.1"/>
<line x1="787.15" y1="651.00" x2="787.15" y2="791.50" stroke="rgba(84,84,84,0.13)" stroke-width="1.1"/>
<line x1="182.10" y1="686.95" x2="799.70" y2="686.95" stroke="rgba(84,84,84,0.13)" stroke-width="1.1"/>
<line x1="182.10" y1="722.00" x2="799.70" y2="722.00" stroke="rgba(84,84,84,0.13)" stroke-width="1.1"/>
<line x1="182.10" y1="757.05" x2="799.70" y2="757.05" stroke="rgba(84,84,84,0.13)" stroke-width="1.1"/>
<rect x="181.20" y="650.10" width="619.40" height="142.30" fill="none" stroke="#828282" stroke-width="1.8"/>
<rect x="693.60" y="660.75" width="14.6" height="10.4" fill="#fffff4" stroke="#ccc" stroke-width="1"/>
<rect x="695.00" y="662.00" width="12" height="8" fill="#0000ff"/>
<path d="M799.10 640.05L810.10 651.05L799.10 662.05L788.10 651.05Z" fill="#ff0000"/>
</svg>
<div class="yl" style="left:139.70px;top:643.60px">9000</div>
<div class="yl" style="left:139.70px;top:678.65px">8500</div>
<div class="yl" style="left:139.70px;top:713.70px">8000</div>
<div class="yl" style="left:139.70px;top:748.75px">7500</div>
<div class="yl" style="left:139.70px;top:783.80px">7000</div>
<div class="xl" style="left:161.20px;top:795.80px">0</div>
<div class="xl" style="left:221.73px;top:795.80px">100</div>
<div class="xl" style="left:282.25px;top:795.80px">200</div>
<div class="xl" style="left:342.77px;top:795.80px">300</div>
<div class="xl" style="left:403.30px;top:795.80px">400</div>
<div class="xl" style="left:463.82px;top:795.80px">500</div>
<div class="xl" style="left:524.35px;top:795.80px">600</div>
<div class="xl" style="left:584.88px;top:795.80px">700</div>
<div class="xl" style="left:645.40px;top:795.80px">800</div>
<div class="xl" style="left:705.92px;top:795.80px">900</div>
<div class="xl" style="left:766.45px;top:795.80px">1000</div>
<div class="lgt" style="left:711.90px;top:658.50px;color:#8e8e8e">aida06 3.8.W</div>
<svg style="left:1122px;top:635px" width="640" height="172" viewBox="1122 635 640 172">
<rect x="1127.20" y="650.10" width="619.40" height="142.30" fill="#fff" stroke="none"/>
<line x1="1188.42" y1="651.00" x2="1188.42" y2="791.50" stroke="rgba(84,84,84,0.13)" stroke-width="1.1"/>
<line x1="1248.95" y1="651.00" x2="1248.95" y2="791.50" stroke="rgba(84,84,84,0.13)" stroke-width="1.1"/>
<line x1="1309.47" y1="651.00" x2="1309.47" y2="791.50" stroke="rgba(84,84,84,0.13)" stroke-width="1.1"/>
<line x1="1370.00" y1="651.00" x2="1370.00" y2="791.50" stroke="rgba(84,84,84,0.13)" stroke-width="1.1"/>
<line x1="1430.52" y1="651.00" x2="1430.52" y2="791.50" stroke="rgba(84,84,84,0.13)" stroke-width="1.1"/>
<line x1="1491.05" y1="651.00" x2="1491.05" y2="791.50" stroke="rgba(84,84,84,0.13)" stroke-width="1.1"/>
<line x1="1551.57" y1="651.00" x2="1551.57" y2="791.50" stroke="rgba(84,84,84,0.13)" stroke-width="1.1"/>
<line x1="1612.10" y1="651.00" x2="1612.10" y2="791.50" stroke="rgba(84,84,84,0.13)" stroke-width="1.1"/>
<line x1="1672.62" y1="651.00" x2="1672.62" y2="791.50" stroke="rgba(84,84,84,0.13)" stroke-width="1.1"/>
<line x1="1733.15" y1="651.00" x2="1733.15" y2="791.50" stroke="rgba(84,84,84,0.13)" stroke-width="1.1"/>
<line x1="1128.10" y1="686.95" x2="1745.70" y2="686.95" stroke="rgba(84,84,84,0.13)" stroke-width="1.1"/>
<line x1="1128.10" y1="722.00" x2="1745.70" y2="722.00" stroke="rgba(84,84,84,0.13)" stroke-width="1.1"/>
<line x1="1128.10" y1="757.05" x2="1745.70" y2="757.05" stroke="rgba(84,84,84,0.13)" stroke-width="1.1"/>
<polyline fill="none" stroke="#3838ff" stroke-width="1.3" stroke-linejoin="round" points="1127.9,733.0 1128.5,731.7 1129.1,736.9 1129.7,744.4 1130.3,744.2 1130.9,739.3 1131.5,738.9 1132.1,740.2 1132.7,742.1 1133.3,743.1 1134.0,737.3 1134.6,737.8 1135.2,733.6 1135.8,730.3 1136.4,730.0 1137.0,730.5 1137.6,730.6 1138.2,730.8 1138.8,732.1 1139.4,735.0 1140.0,737.8 1140.6,735.6 1141.2,732.8 1141.8,730.4 1142.4,728.1 1143.0,727.7 1143.6,728.6 1144.2,735.6 1144.8,738.6 1145.5,738.3 1146.1,735.6 1146.7,734.2 1147.3,735.6 1147.9,731.0 1148.5,731.5 1149.1,737.7 1149.7,730.6 1150.3,728.3 1150.9,732.4 1151.5,738.7 1152.1,741.5 1152.7,738.6 1153.3,738.1 1153.9,733.6 1154.5,727.5 1155.1,733.4 1155.7,733.6 1156.3,730.6 1157.0,729.1 1157.6,732.7 1158.2,738.3 1158.8,732.7 1159.4,734.8 1160.0,741.3 1160.6,737.9 1161.2,735.3 1161.8,733.5 1162.4,734.4 1163.0,738.0 1163.6,731.0 1164.2,727.1 1164.8,722.8 1165.4,728.0 1166.0,734.6 1166.6,731.0 1167.2,738.1 1167.8,738.5 1168.5,743.2 1169.1,735.8 1169.7,732.0 1170.3,732.1 1170.9,728.7 1171.5,728.1 1172.1,730.5 1172.7,728.2 1173.3,723.9 1173.9,727.2 1174.5,727.6 1175.1,727.2 1175.7,735.9 1176.3,733.4 1176.9,736.9 1177.5,736.0 1178.1,735.1 1178.7,734.2 1179.3,733.4 1180.0,736.0 1180.6,731.4 1181.2,728.1 1181.8,733.3 1182.4,736.8 1183.0,737.7 1183.6,734.4 1184.2,734.9 1184.8,734.6 1185.4,736.9 1186.0,735.6 1186.6,735.8 1187.2,729.8 1187.8,728.9 1188.4,729.4 1189.0,723.3 1189.6,723.5 1190.2,727.4 1190.8,730.4 1191.5,728.6 1192.1,733.8 1192.7,736.0 1193.3,736.7 1193.9,736.3 1194.5,736.0 1195.1,738.6 1195.7,737.3 1196.3,742.0 1196.9,745.7 1197.5,744.0 1198.1,736.0 1198.7,729.9 1199.3,730.3 1199.9,728.9 1200.5,728.9 1201.1,735.6 1201.7,739.6 1202.3,739.0 1203.0,738.1 1203.6,731.9 1204.2,732.5 1204.8,734.6 1205.4,734.9 1206.0,735.0 1206.6,733.7 1207.2,730.3 1207.8,729.2 1208.4,725.6 1209.0,724.2 1209.6,726.6 1210.2,731.6 1210.8,735.9 1211.4,743.1 1212.0,743.4 1212.6,739.9 1213.2,734.1 1213.8,734.7 1214.5,732.6 1215.1,732.3 1215.7,731.5 1216.3,731.0 1216.9,729.2 1217.5,729.9 1218.1,732.9 1218.7,731.3 1219.3,731.0 1219.9,734.6 1220.5,738.4 1221.1,739.0 1221.7,739.9 1222.3,741.7 1222.9,736.2 1223.5,731.0 1224.1,728.9 1224.7,727.3 1225.3,726.3 1226.0,730.0 1226.6,735.1 1227.2,737.5 1227.8,736.4 1228.4,736.2 1229.0,739.4 1229.6,740.3 1230.2,739.8 1230.8,737.4 1231.4,733.7 1232.0,732.8 1232.6,732.7 1233.2,734.1 1233.8,729.7 1234.4,730.8 1235.0,731.5 1235.6,731.9 1236.2,738.7 1236.8,742.4 1237.5,738.9 1238.1,735.6 1238.7,733.6 1239.3,730.7 1239.9,730.1 1240.5,729.9 1241.1,729.3 1241.7,728.5 1242.3,729.9 1242.9,732.5 1243.5,734.3 1244.1,731.0 1244.7,733.3 1245.3,736.6 1245.9,734.6 1246.5,732.7 1247.1,734.7 1247.7,729.4 1248.3,729.1 1248.9,732.5 1249.6,729.4 1250.2,729.8 1250.8,733.3 1251.4,733.5 1252.0,735.3 1252.6,737.0 1253.2,734.6 1253.8,732.5 1254.4,731.2 1255.0,731.8 1255.6,732.8 1256.2,734.6 1256.8,734.4 1257.4,734.6 1258.0,736.5 1258.6,736.9 1259.2,733.5 1259.8,730.1 1260.4,733.6 1261.1,737.3 1261.7,738.4 1262.3,732.0 1262.9,729.5 1263.5,728.3 1264.1,731.5 1264.7,733.5 1265.3,736.2 1265.9,738.2 1266.5,734.9 1267.1,736.8 1267.7,736.5 1268.3,732.5 1268.9,732.6 1269.5,734.6 1270.1,731.5 1270.7,730.6 1271.3,732.7 1271.9,735.5 1272.6,734.3 1273.2,730.3 1273.8,732.9 1274.4,736.2 1275.0,734.7 1275.6,731.4 1276.2,731.8 1276.8,730.9 1277.4,733.1 1278.0,734.1 1278.6,733.8 1279.2,735.6 1279.8,732.4 1280.4,730.5 1281.0,730.7 1281.6,732.9 1282.2,733.6 1282.8,735.2 1283.4,736.2 1284.1,734.9 1284.7,732.7 1285.3,729.6 1285.9,727.8 1286.5,731.1 1287.1,734.3 1287.7,734.9 1288.3,734.6 1288.9,734.8 1289.5,734.7 1290.1,734.0 1290.7,732.1 1291.3,731.5 1291.9,731.5 1292.5,730.2 1293.1,732.2 1293.7,735.4 1294.3,736.5 1294.9,736.7 1295.6,738.9 1296.2,736.3 1296.8,730.6 1297.4,728.0 1298.0,727.7 1298.6,736.2 1299.2,742.4 1299.8,740.2 1300.4,736.6 1301.0,737.3 1301.6,735.4 1302.2,731.9 1302.8,729.7 1303.4,730.6 1304.0,731.4 1304.6,731.7 1305.2,734.5 1305.8,734.6 1306.4,731.4 1307.1,729.6 1307.7,730.8 1308.3,732.7 1308.9,734.7 1309.5,732.0 1310.1,732.9 1310.7,736.2 1311.3,736.0 1311.9,734.9 1312.5,731.5 1313.1,727.8 1313.7,724.5 1314.3,730.6 1314.9,734.6 1315.5,731.3 1316.1,728.8 1316.7,733.1 1317.3,732.1 1317.9,733.8 1318.6,736.3 1319.2,736.1 1319.8,733.3 1320.4,733.1 1321.0,732.4 1321.6,732.8 1322.2,731.7 1322.8,729.2 1323.4,729.8 1324.0,730.7 1324.6,731.7 1325.2,732.4 1325.8,734.9 1326.4,740.3 1327.0,739.5 1327.6,738.4 1328.2,738.1 1328.8,736.4 1329.4,737.6 1330.1,732.5 1330.7,728.3 1331.3,728.3 1331.9,731.5 1332.5,736.7 1333.1,738.2 1333.7,733.0 1334.3,733.3 1334.9,732.4 1335.5,734.6 1336.1,734.3 1336.7,734.2 1337.3,728.3 1337.9,733.1 1338.5,739.6 1339.1,735.8 1339.7,736.3 1340.3,739.8 1340.9,737.8 1341.6,735.9 1342.2,736.6 1342.8,736.0 1343.4,730.4 1344.0,727.2 1344.6,723.9 1345.2,720.3 1345.8,718.2 1346.4,725.2 1347.0,734.2 1347.6,735.6 1348.2,738.2 1348.8,737.1 1349.4,734.1 1350.0,732.2 1350.6,732.3 1351.2,735.4 1351.8,731.6 1352.4,729.5 1353.1,733.3 1353.7,737.3 1354.3,740.3 1354.9,739.7 1355.5,734.0 1356.1,733.4 1356.7,734.7 1357.3,735.4 1357.9,737.0 1358.5,739.4 1359.1,731.7 1359.7,731.7 1360.3,735.7 1360.9,733.9 1361.5,738.0 1362.1,740.8 1362.7,737.7 1363.3,736.5 1363.9,733.9 1364.6,733.6 1365.2,735.0 1365.8,734.1 1366.4,730.4 1367.0,728.6 1367.6,727.9 1368.2,732.7 1368.8,738.9 1369.4,741.4 1370.0,740.7 1370.6,742.6 1371.2,740.9 1371.8,736.0 1372.4,732.6 1373.0,727.2 1373.6,726.2 1374.2,725.8 1374.8,725.6 1375.4,734.6 1376.1,735.4 1376.7,738.0 1377.3,739.8 1377.9,744.1 1378.5,734.5 1379.1,728.4 1379.7,724.0 1380.3,723.3 1380.9,729.2 1381.5,728.8 1382.1,730.3 1382.7,729.5 1383.3,729.6 1383.9,727.3 1384.5,725.0 1385.1,725.0 1385.7,724.1 1386.3,731.5 1386.9,728.3 1387.6,728.0 1388.2,733.7 1388.8,730.6 1389.4,728.2 1390.0,731.2 1390.6,731.6 1391.2,730.2 1391.8,732.8 1392.4,737.7 1393.0,738.3 1393.6,729.3 1394.2,728.2 1394.8,730.3 1395.4,732.0 1396.0,733.5 1396.6,732.9 1397.2,735.3 1397.8,732.3 1398.4,734.9 1399.1,733.9 1399.7,729.9 1400.3,729.8 1400.9,733.2 1401.5,732.7 1402.1,730.8 1402.7,733.1 1403.3,731.8 1403.9,731.0 1404.5,735.0 1405.1,734.7 1405.7,729.2 1406.3,730.6 1406.9,729.0 1407.5,731.4 1408.1,732.7 1408.7,732.5 1409.3,726.1 1409.9,731.8 1410.6,740.3 1411.2,742.8 1411.8,739.0 1412.4,732.1 1413.0,731.9 1413.6,730.2 1414.2,731.1 1414.8,732.8 1415.4,734.5 1416.0,735.2 1416.6,738.1 1417.2,735.7 1417.8,733.2 1418.4,730.7 1419.0,730.8 1419.6,732.0 1420.2,733.7 1420.8,735.2 1421.4,732.5 1422.1,733.7 1422.7,734.4 1423.3,734.5 1423.9,734.3 1424.5,733.4 1425.1,732.2 1425.7,733.5 1426.3,736.3 1426.9,736.0 1427.5,733.9 1428.1,733.9 1428.7,726.7 1429.3,725.6 1429.9,733.8 1430.5,733.8 1431.1,736.3 1431.7,739.3 1432.3,740.6 1432.9,739.0 1433.6,734.0 1434.2,730.4 1434.8,731.2 1435.4,736.3 1436.0,735.3 1436.6,734.5 1437.2,735.7 1437.8,735.3 1438.4,735.8 1439.0,737.2 1439.6,732.7 1440.2,729.8 1440.8,729.9 1441.4,733.6 1442.0,740.0 1442.6,742.5 1443.2,737.5 1443.8,733.2 1444.4,730.7 1445.1,727.7 1445.7,728.0 1446.3,730.5 1446.9,729.4 1447.5,731.8 1448.1,736.3 1448.7,735.6 1449.3,734.3 1449.9,733.1 1450.5,734.9 1451.1,734.8 1451.7,734.1 1452.3,729.9 1452.9,729.3 1453.5,729.5 1454.1,726.7 1454.7,730.9 1455.3,733.6 1455.9,732.1 1456.6,735.1 1457.2,736.3 1457.8,738.4 1458.4,738.9 1459.0,733.7 1459.6,730.9 1460.2,732.2 1460.8,731.3 1461.4,730.5 1462.0,729.8 1462.6,729.1 1463.2,731.5 1463.8,735.8 1464.4,735.1 1465.0,733.9 1465.6,737.4 1466.2,736.2 1466.8,733.7 1467.4,733.5 1468.1,734.4 1468.7,732.7 1469.3,730.8 1469.9,732.8 1470.5,734.7 1471.1,733.7 1471.7,733.8 1472.3,733.8 1472.9,736.2 1473.5,738.0 1474.1,738.1 1474.7,735.1 1475.3,733.8 1475.9,732.7 1476.5,730.3 1477.1,731.2 1477.7,729.9 1478.3,729.5 1478.9,731.3 1479.6,735.4 1480.2,736.5 1480.8,738.5 1481.4,739.4 1482.0,736.0 1482.6,733.8 1483.2,731.5 1483.8,733.7 1484.4,734.2 1485.0,732.9 1485.6,734.6 1486.2,735.0 1486.8,733.2 1487.4,734.2 1488.0,733.3 1488.6,733.5 1489.2,735.9 1489.8,734.0 1490.4,731.9 1491.0,731.3 1491.7,732.9 1492.3,734.1 1492.9,735.4 1493.5,732.8 1494.1,731.8 1494.7,732.0 1495.3,729.8 1495.9,733.6 1496.5,732.6 1497.1,731.8 1497.7,732.6 1498.3,736.8 1498.9,736.1 1499.5,732.0 1500.1,731.8 1500.7,731.1 1501.3,731.1 1501.9,735.2 1502.5,734.3 1503.2,732.8 1503.8,731.8 1504.4,732.0 1505.0,735.1 1505.6,735.7 1506.2,736.0 1506.8,731.0 1507.4,733.0 1508.0,732.2 1508.6,733.6 1509.2,737.2 1509.8,737.3 1510.4,736.8 1511.0,735.3 1511.6,732.1 1512.2,730.0 1512.8,731.9 1513.4,734.5 1514.0,735.6 1514.7,733.9 1515.3,732.9 1515.9,731.5 1516.5,730.9 1517.1,733.3 1517.7,732.7 1518.3,729.7 1518.9,733.3 1519.5,736.6 1520.1,736.8 1520.7,738.8 1521.3,735.2 1521.9,727.3 1522.5,726.7 1523.1,727.4 1523.7,730.5 1524.3,733.3 1524.9,733.9 1525.5,732.2 1526.2,735.3 1526.8,735.9 1527.4,734.5 1528.0,733.0 1528.6,731.9 1529.2,732.5 1529.8,732.9 1530.4,734.1 1531.0,731.5 1531.6,731.3 1532.2,733.2 1532.8,734.7 1533.4,730.8 1534.0,728.9 1534.6,732.8 1535.2,733.8 1535.8,735.1 1536.4,734.4 1537.0,730.7 1537.7,731.0 1538.3,730.6 1538.9,732.3 1539.5,731.8 1540.1,729.6 1540.7,731.8 1541.3,738.9 1541.9,739.6 1542.5,738.8 1543.1,737.7 1543.7,733.1 1544.3,732.0 1544.9,730.6 1545.5,728.9 1546.1,729.2 1546.7,730.0 1547.3,738.1 1547.9,741.6 1548.5,743.1 1549.2,740.3 1549.8,736.5 1550.4,736.2 1551.0,734.9 1551.6,730.8 1552.2,728.4 1552.8,729.0 1553.4,727.3 1554.0,727.7 1554.6,732.6 1555.2,734.1 1555.8,730.5 1556.4,736.9 1557.0,742.4 1557.6,736.8 1558.2,733.1 1558.8,730.9 1559.4,731.8 1560.0,733.7 1560.7,732.4 1561.3,727.9 1561.9,728.4 1562.5,734.4 1563.1,735.9 1563.7,737.5 1564.3,739.1 1564.9,735.3 1565.5,734.7 1566.1,734.8 1566.7,737.2 1567.3,735.7 1567.9,732.3 1568.5,730.9 1569.1,731.4 1569.7,730.1 1570.3,729.3 1570.9,728.6 1571.5,730.9 1572.2,736.1 1572.8,738.1 1573.4,737.5 1574.0,730.9 1574.6,735.4 1575.2,732.1 1575.8,732.2 1576.4,733.8 1577.0,730.9 1577.6,735.8 1578.2,738.4 1578.8,732.5 1579.4,734.0 1580.0,737.2 1580.6,731.2 1581.2,732.2 1581.8,731.3 1582.4,729.7 1583.0,729.2 1583.7,731.6 1584.3,731.8 1584.9,735.2 1585.5,736.2 1586.1,739.7 1586.7,733.9 1587.3,728.1 1587.9,729.4 1588.5,731.0 1589.1,734.5 1589.7,737.4 1590.3,741.7 1590.9,745.8 1591.5,744.8 1592.1,739.0 1592.7,732.6 1593.3,727.8 1593.9,731.6 1594.5,731.1 1595.2,730.7 1595.8,735.1 1596.4,736.9 1597.0,737.0 1597.6,734.7 1598.2,732.4 1598.8,734.0 1599.4,733.5 1600.0,728.4 1600.6,733.0 1601.2,738.1 1601.8,738.4 1602.4,741.2 1603.0,735.4 1603.6,726.3 1604.2,724.7 1604.8,728.6 1605.4,730.0 1606.0,732.3 1606.7,730.9 1607.3,737.6 1607.9,735.4 1608.5,736.1 1609.1,728.0 1609.7,730.7 1610.3,741.1 1610.9,734.7 1611.5,732.8 1612.1,734.3 1612.7,731.3 1613.3,726.9 1613.9,733.8 1614.5,732.9 1615.1,729.7 1615.7,734.9 1616.3,735.1 1616.9,742.5 1617.5,739.0 1618.2,734.2 1618.8,734.9 1619.4,736.7 1620.0,732.7 1620.6,725.6 1621.2,727.9 1621.8,730.0 1622.4,729.2 1623.0,733.4 1623.6,738.9 1624.2,743.1 1624.8,736.4 1625.4,733.3 1626.0,732.7 1626.6,734.4 1627.2,735.7 1627.8,727.8 1628.4,725.2 1629.0,727.0 1629.7,735.3 1630.3,734.3 1630.9,733.3 1631.5,734.5 1632.1,736.7 1632.7,735.0 1633.3,735.2 1633.9,731.2 1634.5,730.8 1635.1,731.0 1635.7,734.9 1636.3,734.8 1636.9,731.4 1637.5,734.5 1638.1,735.4 1638.7,732.3 1639.3,731.8 1639.9,734.6 1640.5,734.1 1641.2,734.8 1641.8,735.4 1642.4,736.0 1643.0,733.0 1643.6,727.3 1644.2,730.6 1644.8,733.2 1645.4,733.9 1646.0,733.5 1646.6,735.7 1647.2,738.0 1647.8,738.8 1648.4,738.4 1649.0,737.2 1649.6,734.3 1650.2,731.6 1650.8,732.5 1651.4,731.0 1652.0,733.2 1652.7,731.3 1653.3,732.0 1653.9,735.3 1654.5,736.0 1655.1,734.4 1655.7,736.1 1656.3,738.4 1656.9,736.0 1657.5,734.4 1658.1,733.6 1658.7,731.9 1659.3,731.4 1659.9,731.7 1660.5,731.4 1661.1,731.6 1661.7,732.3 1662.3,732.9 1662.9,734.6 1663.5,735.4 1664.2,736.6 1664.8,737.9 1665.4,736.1 1666.0,736.9 1666.6,736.9 1667.2,733.5 1667.8,731.6 1668.4,730.0 1669.0,730.6 1669.6,735.7 1670.2,733.7 1670.8,734.3 1671.4,730.0 1672.0,733.1 1672.6,739.3 1673.2,735.4 1673.8,735.3 1674.4,735.6 1675.0,736.3 1675.7,737.0 1676.3,731.5 1676.9,730.8 1677.5,731.0 1678.1,731.5 1678.7,732.1 1679.3,734.7 1679.9,735.1 1680.5,737.1 1681.1,736.8 1681.7,732.7 1682.3,732.4 1682.9,734.6 1683.5,737.9 1684.1,736.4 1684.7,734.1 1685.3,731.2 1685.9,727.3 1686.5,728.5 1687.2,734.6 1687.8,735.0 1688.4,730.7 1689.0,729.9 1689.6,730.9 1690.2,733.1 1690.8,736.3 1691.4,735.2 1692.0,732.9 1692.6,734.1 1693.2,734.3 1693.8,732.4 1694.4,731.3 1695.0,736.1 1695.6,738.2 1696.2,733.0 1696.8,727.9 1697.4,725.9 1698.0,725.6 1698.7,731.6 1699.3,734.2 1699.9,734.5 1700.5,738.0 1701.1,737.9 1701.7,737.9 1702.3,735.7 1702.9,732.7 1703.5,732.8 1704.1,733.8 1704.7,733.5 1705.3,732.3 1705.9,732.1 1706.5,732.7 1707.1,733.9 1707.7,733.6 1708.3,732.5 1708.9,729.6 1709.5,727.0 1710.2,726.0 1710.8,723.3 1711.4,724.0 1712.0,726.4 1712.6,729.6 1713.2,731.1 1713.8,731.9 1714.4,733.4 1715.0,733.0 1715.6,734.6 1716.2,735.5 1716.8,735.9 1717.4,737.4 1718.0,735.8 1718.6,735.4 1719.2,733.2 1719.8,729.4 1720.4,729.7 1721.0,731.3 1721.7,731.3 1722.3,733.1 1722.9,735.2 1723.5,736.4 1724.1,737.7 1724.7,734.6 1725.3,732.2 1725.9,732.1 1726.5,734.1 1727.1,733.7 1727.7,732.6 1728.3,733.9 1728.9,734.1 1729.5,733.5 1730.1,735.6 1730.7,731.9 1731.3,728.8 1731.9,730.6 1732.5,732.9 1733.1,733.9 1733.8,732.0 1734.4,731.4 1735.0,731.8 1735.6,730.8 1736.2,731.2 1736.8,731.5 1737.4,733.8 1738.0,734.4 1738.6,736.6 1739.2,739.8 1739.8,738.1 1740.4,739.4 1741.0,741.4 1741.6,740.3 1742.2,737.3 1742.8,736.9 1743.4,740.4 1744.0,743.6 1744.6,743.1"/>
<rect x="1127.20" y="650.10" width="619.40" height="142.30" fill="none" stroke="#828282" stroke-width="1.8"/>
<rect x="1639.60" y="660.75" width="14.6" height="10.4" fill="#fffff4" stroke="#ccc" stroke-width="1"/>
<rect x="1641.00" y="662.00" width="12" height="8" fill="#0000ff"/>
<path d="M1745.10 640.05L1756.10 651.05L1745.10 662.05L1734.10 651.05Z" fill="#ff0000"/>
</svg>
<div class="yl" style="left:1085.70px;top:643.60px">9000</div>
<div class="yl" style="left:1085.70px;top:678.65px">8500</div>
<div class="yl" style="left:1085.70px;top:713.70px">8000</div>
<div class="yl" style="left:1085.70px;top:748.75px">7500</div>
<div class="yl" style="left:1085.70px;top:783.80px">7000</div>
<div class="xl" style="left:1107.20px;top:795.80px">0</div>
<div class="xl" style="left:1167.73px;top:795.80px">100</div>
<div class="xl" style="left:1228.25px;top:795.80px">200</div>
<div class="xl" style="left:1288.78px;top:795.80px">300</div>
<div class="xl" style="left:1349.30px;top:795.80px">400</div>
<div class="xl" style="left:1409.83px;top:795.80px">500</div>
<div class="xl" style="left:1470.35px;top:795.80px">600</div>
<div class="xl" style="left:1530.88px;top:795.80px">700</div>
<div class="xl" style="left:1591.40px;top:795.80px">800</div>
<div class="xl" style="left:1651.93px;top:795.80px">900</div>
<div class="xl" style="left:1712.45px;top:795.80px">1000</div>
<div class="lgt" style="left:1657.90px;top:658.50px;color:#8e8e8e">aida07 1.8.W</div>
<svg style="left:176px;top:816px" width="640" height="172" viewBox="176 816 640 172">
<rect x="181.20" y="831.20" width="619.40" height="142.30" fill="#fff" stroke="none"/>
<line x1="242.43" y1="832.10" x2="242.43" y2="972.60" stroke="rgba(84,84,84,0.13)" stroke-width="1.1"/>
<line x1="302.95" y1="832.10" x2="302.95" y2="972.60" stroke="rgba(84,84,84,0.13)" stroke-width="1.1"/>
<line x1="363.48" y1="832.10" x2="363.48" y2="972.60" stroke="rgba(84,84,84,0.13)" stroke-width="1.1"/>
<line x1="424.00" y1="832.10" x2="424.00" y2="972.60" stroke="rgba(84,84,84,0.13)" stroke-width="1.1"/>
<line x1="484.52" y1="832.10" x2="484.52" y2="972.60" stroke="rgba(84,84,84,0.13)" stroke-width="1.1"/>
<line x1="545.05" y1="832.10" x2="545.05" y2="972.60" stroke="rgba(84,84,84,0.13)" stroke-width="1.1"/>
<line x1="605.58" y1="832.10" x2="605.58" y2="972.60" stroke="rgba(84,84,84,0.13)" stroke-width="1.1"/>
<line x1="666.10" y1="832.10" x2="666.10" y2="972.60" stroke="rgba(84,84,84,0.13)" stroke-width="1.1"/>
<line x1="726.62" y1="832.10" x2="726.62" y2="972.60" stroke="rgba(84,84,84,0.13)" stroke-width="1.1"/>
<line x1="787.15" y1="832.10" x2="787.15" y2="972.60" stroke="rgba(84,84,84,0.13)" stroke-width="1.1"/>
<line x1="182.10" y1="868.05" x2="799.70" y2="868.05" stroke="rgba(84,84,84,0.13)" stroke-width="1.1"/>
<line x1="182.10" y1="903.10" x2="799.70" y2="903.10" stroke="rgba(84,84,84,0.13)" stroke-width="1.1"/>
<line x1="182.10" y1="938.15" x2="799.70" y2="938.15" stroke="rgba(84,84,84,0.13)" stroke-width="1.1"/>
<polyline fill="none" stroke="#3838ff" stroke-width="1.3" stroke-linejoin="round" points="181.9,918.9 182.5,919.0 183.1,917.9 183.7,916.0 184.3,914.4 184.9,915.2 185.5,917.0 186.1,916.8 186.7,916.4 187.3,916.6 188.0,917.6 188.6,919.4 189.2,920.4 189.8,919.4 190.4,917.8 191.0,916.9 191.6,916.6 192.2,916.1 192.8,914.5 193.4,915.1 194.0,917.5 194.6,919.5 195.2,919.3 195.8,919.1 196.4,919.5 197.0,919.1 197.6,918.2 198.2,916.3 198.8,914.2 199.5,912.6 200.1,914.0 200.7,915.8 201.3,917.7 201.9,918.3 202.5,919.1 203.1,920.1 203.7,921.3 204.3,920.9 204.9,919.1 205.5,916.5 206.1,914.2 206.7,914.0 207.3,914.7 207.9,914.6 208.5,914.4 209.1,915.1 209.7,917.5 210.3,919.1 211.0,919.0 211.6,919.7 212.2,919.6 212.8,918.4 213.4,917.5 214.0,916.0 214.6,914.6 215.2,916.0 215.8,918.6 216.4,918.5 217.0,917.5 217.6,917.0 218.2,915.6 218.8,916.6 219.4,918.0 220.0,917.7 220.6,915.5 221.2,915.8 221.8,915.6 222.5,916.6 223.1,917.7 223.7,918.9 224.3,918.7 224.9,919.1 225.5,920.2 226.1,916.5 226.7,915.7 227.3,915.0 227.9,915.6 228.5,922.0 229.1,924.2 229.7,930.2 230.3,924.1 230.9,916.4 231.5,916.4 232.1,914.9 232.7,913.9 233.3,915.2 234.0,911.8 234.6,911.5 235.2,909.6 235.8,910.8 236.4,915.2 237.0,917.5 237.6,919.6 238.2,916.3 238.8,914.1 239.4,914.1 240.0,916.3 240.6,920.3 241.2,918.4 241.8,921.5 242.4,918.0 243.0,916.8 243.6,910.4 244.2,909.9 244.8,908.7 245.5,912.3 246.1,918.9 246.7,922.5 247.3,921.2 247.9,918.2 248.5,921.9 249.1,922.7 249.7,919.5 250.3,914.1 250.9,909.6 251.5,904.2 252.1,906.0 252.7,910.1 253.3,913.8 253.9,913.9 254.5,915.5 255.1,919.1 255.7,924.6 256.3,929.5 257.0,929.6 257.6,926.7 258.2,922.1 258.8,917.0 259.4,913.4 260.0,913.7 260.6,915.7 261.2,918.4 261.8,920.3 262.4,919.1 263.0,918.6 263.6,918.6 264.2,918.7 264.8,917.7 265.4,915.2 266.0,913.1 266.6,913.7 267.2,916.8 267.8,917.7 268.5,917.5 269.1,916.1 269.7,915.3 270.3,916.1 270.9,916.3 271.5,917.4 272.1,917.4 272.7,918.0 273.3,919.0 273.9,919.2 274.5,918.7 275.1,918.7 275.7,918.7 276.3,917.7 276.9,916.3 277.5,913.5 278.1,911.4 278.7,913.7 279.3,917.1 280.0,918.8 280.6,919.2 281.2,917.6 281.8,917.8 282.4,919.7 283.0,919.9 283.6,918.9 284.2,917.0 284.8,917.2 285.4,917.8 286.0,918.0 286.6,915.5 287.2,913.8 287.8,915.2 288.4,917.6 289.0,918.0 289.6,919.0 290.2,919.3 290.8,919.2 291.5,919.4 292.1,916.5 292.7,913.3 293.3,912.0 293.9,913.9 294.5,917.1 295.1,918.0 295.7,916.8 296.3,914.7 296.9,911.0 297.5,907.2 298.1,904.7 298.7,906.1 299.3,911.1 299.9,918.7 300.5,927.7 301.1,935.6 301.7,938.4 302.3,934.4 302.9,925.4 303.6,915.0 304.2,905.6 304.8,900.1 305.4,900.8 306.0,908.8 306.6,921.7 307.2,934.9 307.8,943.4 308.4,943.1 309.0,933.7 309.6,919.4 310.2,905.4 310.8,896.4 311.4,895.5 312.0,902.7 312.6,914.3 313.2,926.3 313.8,935.6 314.4,939.3 315.1,935.3 315.7,925.7 316.3,915.1 316.9,906.8 317.5,903.2 318.1,904.5 318.7,907.9 319.3,908.8 319.9,905.9 320.5,902.6 321.1,902.9 321.7,907.4 322.3,913.9 322.9,919.8 323.5,924.2 324.1,927.2 324.7,927.4 325.3,925.2 325.9,921.8 326.6,919.0 327.2,917.5 327.8,917.7 328.4,916.8 329.0,914.4 329.6,913.4 330.2,914.5 330.8,916.7 331.4,919.5 332.0,920.6 332.6,921.0 333.2,920.0 333.8,918.3 334.4,917.3 335.0,915.7 335.6,914.7 336.2,914.7 336.8,915.7 337.4,915.8 338.1,916.7 338.7,917.2 339.3,917.2 339.9,918.6 340.5,919.5 341.1,917.1 341.7,916.5 342.3,916.1 342.9,916.8 343.5,917.6 344.1,917.6 344.7,916.8 345.3,917.3 345.9,918.9 346.5,919.5 347.1,917.2 347.7,915.4 348.3,915.3 348.9,916.7 349.6,916.4 350.2,916.3 350.8,914.8 351.4,915.7 352.0,917.8 352.6,918.3 353.2,917.6 353.8,918.0 354.4,919.2 355.0,919.8 355.6,919.5 356.2,916.7 356.8,915.1 357.4,915.1 358.0,916.5 358.6,919.2 359.2,919.2 359.8,918.1 360.4,919.0 361.1,919.0 361.7,918.1 362.3,915.5 362.9,912.4 363.5,911.9 364.1,913.7 364.7,914.3 365.3,916.3 365.9,919.3 366.5,920.7 367.1,922.1 367.7,920.8 368.3,917.6 368.9,916.0 369.5,915.3 370.1,915.3 370.7,916.2 371.3,915.1 371.9,914.7 372.6,916.8 373.2,918.6 373.8,918.3 374.4,917.1 375.0,915.5 375.6,916.0 376.2,917.7 376.8,918.3 377.4,917.5 378.0,916.3 378.6,915.5 379.2,916.5 379.8,917.6 380.4,917.8 381.0,916.9 381.6,916.4 382.2,917.1 382.8,917.3 383.4,917.3 384.1,915.8 384.7,916.2 385.3,918.8 385.9,919.1 386.5,917.5 387.1,916.4 387.7,917.5 388.3,918.7 388.9,917.2 389.5,914.4 390.1,912.5 390.7,912.9 391.3,916.6 391.9,919.8 392.5,920.4 393.1,920.4 393.7,921.4 394.3,922.0 394.9,920.6 395.6,918.4 396.2,916.2 396.8,913.4 397.4,912.1 398.0,912.4 398.6,912.5 399.2,913.7 399.8,918.0 400.4,920.8 401.0,921.5 401.6,919.7 402.2,917.1 402.8,916.2 403.4,917.0 404.0,918.1 404.6,918.1 405.2,917.9 405.8,918.5 406.4,920.6 407.1,919.4 407.7,916.1 408.3,913.6 408.9,913.2 409.5,914.9 410.1,916.0 410.7,916.6 411.3,917.0 411.9,916.8 412.5,918.7 413.1,921.8 413.7,920.5 414.3,918.5 414.9,915.5 415.5,916.7 416.1,916.1 416.7,914.5 417.3,913.9 417.9,917.1 418.6,921.2 419.2,919.3 419.8,919.7 420.4,920.1 421.0,917.1 421.6,920.3 422.2,921.0 422.8,913.0 423.4,907.5 424.0,906.7 424.6,912.0 425.2,921.4 425.8,923.7 426.4,924.5 427.0,925.0 427.6,926.0 428.2,921.9 428.8,917.4 429.4,914.8 430.1,908.0 430.7,913.5 431.3,916.7 431.9,918.2 432.5,923.7 433.1,925.2 433.7,924.1 434.3,921.3 434.9,913.1 435.5,909.2 436.1,906.7 436.7,906.6 437.3,908.4 437.9,914.8 438.5,917.1 439.1,920.0 439.7,922.5 440.3,921.8 440.9,918.7 441.6,915.0 442.2,914.5 442.8,916.8 443.4,918.5 444.0,919.0 444.6,918.9 445.2,916.5 445.8,916.4 446.4,917.4 447.0,917.2 447.6,917.1 448.2,915.6 448.8,916.9 449.4,916.8 450.0,916.9 450.6,918.4 451.2,919.0 451.8,920.4 452.4,919.6 453.1,919.2 453.7,916.4 454.3,915.4 454.9,916.5 455.5,916.2 456.1,916.6 456.7,915.2 457.3,915.0 457.9,916.2 458.5,918.5 459.1,917.9 459.7,919.0 460.3,919.4 460.9,920.0 461.5,918.5 462.1,916.7 462.7,915.0 463.3,914.7 463.9,915.0 464.6,915.7 465.2,916.9 465.8,917.9 466.4,918.8 467.0,919.6 467.6,920.1 468.2,918.0 468.8,917.0 469.4,916.1 470.0,914.7 470.6,914.7 471.2,915.4 471.8,915.3 472.4,915.4 473.0,917.0 473.6,919.8 474.2,919.8 474.8,918.9 475.4,918.7 476.1,918.5 476.7,918.1 477.3,916.5 477.9,914.8 478.5,914.6 479.1,915.5 479.7,916.7 480.3,916.5 480.9,917.2 481.5,918.5 482.1,919.0 482.7,918.3 483.3,916.7 483.9,915.3 484.5,915.6 485.1,916.6 485.7,918.3 486.3,918.2 486.9,916.6 487.6,914.0 488.2,913.9 488.8,916.6 489.4,917.2 490.0,917.9 490.6,919.4 491.2,920.3 491.8,920.9 492.4,918.8 493.0,915.9 493.6,914.7 494.2,915.0 494.8,915.2 495.4,915.1 496.0,916.3 496.6,917.3 497.2,920.2 497.8,919.6 498.4,916.7 499.1,915.3 499.7,915.8 500.3,916.0 500.9,917.8 501.5,920.5 502.1,921.0 502.7,920.2 503.3,921.4 503.9,920.8 504.5,917.9 505.1,913.4 505.7,909.9 506.3,909.2 506.9,911.9 507.5,914.5 508.1,916.8 508.7,918.3 509.3,921.6 509.9,922.9 510.6,923.6 511.2,917.8 511.8,917.5 512.4,915.9 513.0,911.9 513.6,912.1 514.2,913.3 514.8,914.3 515.4,915.0 516.0,920.7 516.6,921.5 517.2,918.2 517.8,910.7 518.4,913.9 519.0,916.3 519.6,917.0 520.2,916.3 520.8,912.7 521.4,917.6 522.1,916.3 522.7,921.8 523.3,921.0 523.9,919.4 524.5,923.4 525.1,925.0 525.7,918.1 526.3,914.4 526.9,916.9 527.5,918.3 528.1,916.4 528.7,916.8 529.3,915.5 529.9,917.1 530.5,920.9 531.1,923.6 531.7,921.5 532.3,914.9 532.9,914.6 533.6,915.4 534.2,914.3 534.8,914.6 535.4,920.1 536.0,920.2 536.6,920.5 537.2,922.2 537.8,919.1 538.4,918.4 539.0,913.8 539.6,911.0 540.2,911.8 540.8,913.9 541.4,916.6 542.0,920.6 542.6,923.0 543.2,920.8 543.8,915.8 544.4,913.9 545.0,913.5 545.7,913.1 546.3,912.2 546.9,911.7 547.5,913.3 548.1,915.2 548.7,917.1 549.3,919.4 549.9,923.0 550.5,922.2 551.1,922.4 551.7,918.6 552.3,919.1 552.9,914.6 553.5,910.5 554.1,909.2 554.7,911.2 555.3,914.7 555.9,918.6 556.5,919.4 557.2,918.4 557.8,922.4 558.4,918.9 559.0,913.7 559.6,912.0 560.2,911.6 560.8,911.7 561.4,913.2 562.0,918.7 562.6,918.1 563.2,920.3 563.8,925.3 564.4,921.5 565.0,917.0 565.6,915.9 566.2,912.7 566.8,914.7 567.4,918.4 568.0,917.0 568.7,919.0 569.3,919.3 569.9,918.6 570.5,919.3 571.1,919.2 571.7,914.2 572.3,905.9 572.9,904.1 573.5,907.5 574.1,913.2 574.7,919.4 575.3,926.2 575.9,933.4 576.5,932.2 577.1,925.5 577.7,918.7 578.3,917.2 578.9,916.7 579.5,915.2 580.2,913.1 580.8,908.6 581.4,910.0 582.0,914.6 582.6,916.1 583.2,928.4 583.8,926.3 584.4,924.6 585.0,923.0 585.6,917.6 586.2,914.5 586.8,917.6 587.4,914.6 588.0,918.2 588.6,918.6 589.2,915.8 589.8,909.9 590.4,916.3 591.0,915.0 591.7,910.9 592.3,913.2 592.9,911.9 593.5,915.2 594.1,920.6 594.7,923.0 595.3,919.0 595.9,916.3 596.5,919.5 597.1,920.9 597.7,920.7 598.3,919.0 598.9,912.6 599.5,913.4 600.1,914.0 600.7,913.8 601.3,916.0 601.9,917.0 602.5,915.8 603.2,914.6 603.8,915.3 604.4,918.7 605.0,917.3 605.6,914.5 606.2,920.2 606.8,920.4 607.4,918.2 608.0,916.3 608.6,916.6 609.2,921.2 609.8,921.9 610.4,919.9 611.0,914.9 611.6,914.8 612.2,913.2 612.8,914.6 613.4,915.6 614.0,912.3 614.7,912.6 615.3,916.9 615.9,920.0 616.5,920.0 617.1,920.0 617.7,919.8 618.3,917.2 618.9,914.5 619.5,912.7 620.1,912.9 620.7,915.0 621.3,917.5 621.9,922.8 622.5,922.9 623.1,921.6 623.7,919.7 624.3,918.1 624.9,915.0 625.5,909.0 626.2,906.3 626.8,909.1 627.4,914.6 628.0,920.3 628.6,921.4 629.2,919.9 629.8,920.5 630.4,918.6 631.0,917.7 631.6,917.2 632.2,916.3 632.8,914.1 633.4,914.1 634.0,917.6 634.6,917.6 635.2,918.1 635.8,920.6 636.4,922.8 637.0,920.6 637.7,916.3 638.3,914.0 638.9,913.4 639.5,914.9 640.1,916.9 640.7,918.1 641.3,916.6 641.9,916.2 642.5,920.4 643.1,923.1 643.7,922.3 644.3,919.5 644.9,919.9 645.5,918.7 646.1,916.9 646.7,915.2 647.3,913.7 647.9,915.2 648.5,916.8 649.2,916.9 649.8,918.0 650.4,918.6 651.0,918.6 651.6,920.1 652.2,919.7 652.8,916.7 653.4,915.4 654.0,914.7 654.6,915.7 655.2,917.8 655.8,916.3 656.4,917.9 657.0,920.3 657.6,919.9 658.2,919.8 658.8,918.1 659.4,915.3 660.0,914.5 660.7,915.5 661.3,918.4 661.9,919.2 662.5,917.0 663.1,917.4 663.7,917.7 664.3,915.8 664.9,915.7 665.5,917.2 666.1,916.8 666.7,917.4 667.3,917.6 667.9,918.4 668.5,918.0 669.1,917.3 669.7,918.4 670.3,916.9 670.9,915.8 671.5,916.2 672.2,915.4 672.8,915.8 673.4,917.0 674.0,916.8 674.6,915.9 675.2,915.2 675.8,917.5 676.4,918.2 677.0,917.7 677.6,917.0 678.2,917.0 678.8,916.0 679.4,916.5 680.0,917.6 680.6,917.3 681.2,918.2 681.8,918.4 682.4,917.5 683.0,917.8 683.7,917.1 684.3,916.5 684.9,915.7 685.5,915.6 686.1,915.0 686.7,914.3 687.3,914.8 687.9,917.3 688.5,918.1 689.1,916.9 689.7,915.5 690.3,917.3 690.9,917.7 691.5,917.3 692.1,917.1 692.7,916.6 693.3,916.2 693.9,915.6 694.5,916.6 695.2,918.6 695.8,918.1 696.4,917.3 697.0,918.3 697.6,917.0 698.2,915.9 698.8,914.8 699.4,911.5 700.0,914.8 700.6,915.6 701.2,916.3 701.8,918.1 702.4,920.2 703.0,919.6 703.6,922.6 704.2,918.5 704.8,914.0 705.4,916.4 706.0,912.9 706.7,915.3 707.3,913.1 707.9,909.3 708.5,915.2 709.1,916.1 709.7,920.2 710.3,922.5 710.9,921.7 711.5,917.1 712.1,920.4 712.7,922.2 713.3,917.9 713.9,914.4 714.5,915.6 715.1,914.4 715.7,917.6 716.3,921.4 716.9,923.4 717.5,921.2 718.2,920.1 718.8,918.6 719.4,913.2 720.0,913.7 720.6,912.2 721.2,915.6 721.8,918.9 722.4,916.6 723.0,913.1 723.6,912.7 724.2,914.1 724.8,916.4 725.4,916.9 726.0,919.9 726.6,922.3 727.2,925.5 727.8,921.4 728.4,918.1 729.0,913.8 729.7,913.6 730.3,914.9 730.9,914.9 731.5,914.3 732.1,915.6 732.7,918.3 733.3,920.3 733.9,921.5 734.5,918.5 735.1,915.5 735.7,912.7 736.3,914.7 736.9,917.8 737.5,917.3 738.1,917.2 738.7,915.0 739.3,915.4 739.9,918.5 740.5,918.8 741.2,918.3 741.8,917.2 742.4,918.0 743.0,918.0 743.6,916.9 744.2,914.4 744.8,915.1 745.4,915.7 746.0,917.7 746.6,916.8 747.2,916.9 747.8,919.4 748.4,920.7 749.0,918.5 749.6,915.4 750.2,913.0 750.8,914.0 751.4,917.5 752.0,918.3 752.7,920.2 753.3,918.8 753.9,915.6 754.5,917.4 755.1,918.2 755.7,918.5 756.3,915.9 756.9,914.9 757.5,914.1 758.1,917.7 758.7,919.6 759.3,918.9 759.9,919.1 760.5,920.7 761.1,919.3 761.7,919.4 762.3,917.1 762.9,915.4 763.5,916.3 764.2,916.3 764.8,916.1 765.4,917.1 766.0,916.6 766.6,916.5 767.2,917.7 767.8,916.8 768.4,916.7 769.0,919.2 769.6,919.9 770.2,922.9 770.8,920.3 771.4,919.4 772.0,919.7 772.6,916.0 773.2,917.1 773.8,915.0 774.4,912.8 775.0,912.3 775.7,918.0 776.3,920.8 776.9,919.2 777.5,920.2 778.1,919.4 778.7,920.8 779.3,920.9 779.9,916.2 780.5,914.6 781.1,914.7 781.7,915.7 782.3,917.0 782.9,917.2 783.5,914.4 784.1,914.4 784.7,918.1 785.3,919.3 785.9,921.2 786.5,920.1 787.1,918.3 787.8,916.7 788.4,916.3 789.0,916.9 789.6,915.1 790.2,915.6 790.8,918.6 791.4,920.5 792.0,917.4 792.6,917.6 793.2,917.9 793.8,916.4 794.4,916.6 795.0,918.8 795.6,919.1 796.2,922.1 796.8,926.8 797.4,926.7 798.0,923.8 798.6,920.5"/>
<rect x="181.20" y="831.20" width="619.40" height="142.30" fill="none" stroke="#828282" stroke-width="1.8"/>
<rect x="693.60" y="841.85" width="14.6" height="10.4" fill="#fffff4" stroke="#ccc" stroke-width="1"/>
<rect x="695.00" y="843.10" width="12" height="8" fill="#0000ff"/>
<path d="M799.10 821.15L810.10 832.15L799.10 843.15L788.10 832.15Z" fill="#ff0000"/>
</svg>
<div class="yl" style="left:139.70px;top:824.60px">9000</div>
<div class="yl" style="left:139.70px;top:859.65px">8500</div>
<div class="yl" style="left:139.70px;top:894.70px">8000</div>
<div class="yl" style="left:139.70px;top:929.75px">7500</div>
<div class="yl" style="left:139.70px;top:964.80px">7000</div>
<div class="xl" style="left:161.20px;top:976.90px">0</div>
<div class="xl" style="left:221.73px;top:976.90px">100</div>
<div class="xl" style="left:282.25px;top:976.90px">200</div>
<div class="xl" style="left:342.77px;top:976.90px">300</div>
<div class="xl" style="left:403.30px;top:976.90px">400</div>
<div class="xl" style="left:463.82px;top:976.90px">500</div>
<div class="xl" style="left:524.35px;top:976.90px">600</div>
<div class="xl" style="left:584.88px;top:976.90px">700</div>
<div class="xl" style="left:645.40px;top:976.90px">800</div>
<div class="xl" style="left:705.92px;top:976.90px">900</div>
<div class="xl" style="left:766.45px;top:976.90px">1000</div>
<div class="lgt" style="left:711.90px;top:839.60px;color:#8e8e8e">aida03 1.8.W</div>
<svg style="left:1122px;top:816px" width="640" height="172" viewBox="1122 816 640 172">
<rect x="1127.20" y="831.20" width="619.40" height="142.30" fill="#fff" stroke="none"/>
<line x1="1188.42" y1="832.10" x2="1188.42" y2="972.60" stroke="rgba(0,0,0,0.2)" stroke-width="1.1"/>
<line x1="1248.95" y1="832.10" x2="1248.95" y2="972.60" stroke="rgba(0,0,0,0.2)" stroke-width="1.1"/>
<line x1="1309.47" y1="832.10" x2="1309.47" y2="972.60" stroke="rgba(0,0,0,0.2)" stroke-width="1.1"/>
<line x1="1370.00" y1="832.10" x2="1370.00" y2="972.60" stroke="rgba(0,0,0,0.2)" stroke-width="1.1"/>
<line x1="1430.52" y1="832.10" x2="1430.52" y2="972.60" stroke="rgba(0,0,0,0.2)" stroke-width="1.1"/>
<line x1="1491.05" y1="832.10" x2="1491.05" y2="972.60" stroke="rgba(0,0,0,0.2)" stroke-width="1.1"/>
<line x1="1551.57" y1="832.10" x2="1551.57" y2="972.60" stroke="rgba(0,0,0,0.2)" stroke-width="1.1"/>
<line x1="1612.10" y1="832.10" x2="1612.10" y2="972.60" stroke="rgba(0,0,0,0.2)" stroke-width="1.1"/>
<line x1="1672.62" y1="832.10" x2="1672.62" y2="972.60" stroke="rgba(0,0,0,0.2)" stroke-width="1.1"/>
<line x1="1733.15" y1="832.10" x2="1733.15" y2="972.60" stroke="rgba(0,0,0,0.2)" stroke-width="1.1"/>
<line x1="1128.10" y1="868.05" x2="1745.70" y2="868.05" stroke="rgba(0,0,0,0.2)" stroke-width="1.1"/>
<line x1="1128.10" y1="903.10" x2="1745.70" y2="903.10" stroke="rgba(0,0,0,0.2)" stroke-width="1.1"/>
<line x1="1128.10" y1="938.15" x2="1745.70" y2="938.15" stroke="rgba(0,0,0,0.2)" stroke-width="1.1"/>
<polyline fill="none" stroke="#3838ff" stroke-width="1.3" stroke-linejoin="round" points="1127.9,913.6 1128.5,914.7 1129.1,914.0 1129.7,913.4 1130.3,912.3 1130.9,914.7 1131.5,912.6 1132.1,913.8 1132.7,909.4 1133.3,909.5 1134.0,914.3 1134.6,914.5 1135.2,916.9 1135.8,916.7 1136.4,915.8 1137.0,913.3 1137.6,911.4 1138.2,912.8 1138.8,914.8 1139.4,915.1 1140.0,916.0 1140.6,912.7 1141.2,915.8 1141.8,917.6 1142.4,915.6 1143.0,913.5 1143.6,913.9 1144.2,913.7 1144.8,915.0 1145.5,913.8 1146.1,916.4 1146.7,918.1 1147.3,915.6 1147.9,916.5 1148.5,915.8 1149.1,910.5 1149.7,908.2 1150.3,911.7 1150.9,916.6 1151.5,918.3 1152.1,916.9 1152.7,917.3 1153.3,914.3 1153.9,913.5 1154.5,918.0 1155.1,917.4 1155.7,912.5 1156.3,914.2 1157.0,914.1 1157.6,914.8 1158.2,911.4 1158.8,918.7 1159.4,914.8 1160.0,918.1 1160.6,924.2 1161.2,920.9 1161.8,918.5 1162.4,911.8 1163.0,916.6 1163.6,921.0 1164.2,921.6 1164.8,918.1 1165.4,914.9 1166.0,917.0 1166.6,916.5 1167.2,921.0 1167.8,918.8 1168.5,911.0 1169.1,915.7 1169.7,917.4 1170.3,912.8 1170.9,908.3 1171.5,912.7 1172.1,914.9 1172.7,911.5 1173.3,915.8 1173.9,915.7 1174.5,920.5 1175.1,917.5 1175.7,916.2 1176.3,918.1 1176.9,911.6 1177.5,910.6 1178.1,910.3 1178.7,907.1 1179.3,912.4 1180.0,914.3 1180.6,911.4 1181.2,911.3 1181.8,913.9 1182.4,915.2 1183.0,911.1 1183.6,912.8 1184.2,915.3 1184.8,910.3 1185.4,909.6 1186.0,916.8 1186.6,911.6 1187.2,911.4 1187.8,916.9 1188.4,916.9 1189.0,916.7 1189.6,915.5 1190.2,918.0 1190.8,915.8 1191.5,917.9 1192.1,917.4 1192.7,921.4 1193.3,915.8 1193.9,911.0 1194.5,918.5 1195.1,922.0 1195.7,912.5 1196.3,916.1 1196.9,911.1 1197.5,913.2 1198.1,917.4 1198.7,920.2 1199.3,920.1 1199.9,910.3 1200.5,910.8 1201.1,915.8 1201.7,910.1 1202.3,911.4 1203.0,914.5 1203.6,918.8 1204.2,915.2 1204.8,911.2 1205.4,910.5 1206.0,916.9 1206.6,916.3 1207.2,914.9 1207.8,914.6 1208.4,919.3 1209.0,917.3 1209.6,918.5 1210.2,914.2 1210.8,913.1 1211.4,914.1 1212.0,911.6 1212.6,907.4 1213.2,899.6 1213.8,900.1 1214.5,908.7 1215.1,918.2 1215.7,928.8 1216.3,934.6 1216.9,931.6 1217.5,930.1 1218.1,930.4 1218.7,924.2 1219.3,917.2 1219.9,914.5 1220.5,913.0 1221.1,909.9 1221.7,903.9 1222.3,901.3 1222.9,903.6 1223.5,910.4 1224.1,918.5 1224.7,919.6 1225.3,920.5 1226.0,928.5 1226.6,930.3 1227.2,927.2 1227.8,917.1 1228.4,910.8 1229.0,914.1 1229.6,912.0 1230.2,913.9 1230.8,916.6 1231.4,915.8 1232.0,917.0 1232.6,915.9 1233.2,915.2 1233.8,919.5 1234.4,919.0 1235.0,915.4 1235.6,912.3 1236.2,913.0 1236.8,912.4 1237.5,919.8 1238.1,921.3 1238.7,922.8 1239.3,918.2 1239.9,916.0 1240.5,916.7 1241.1,918.2 1241.7,914.3 1242.3,912.9 1242.9,917.1 1243.5,923.2 1244.1,934.1 1244.7,940.0 1245.3,933.7 1245.9,922.4 1246.5,910.7 1247.1,898.6 1247.7,888.0 1248.3,887.8 1248.9,898.8 1249.6,912.0 1250.2,921.4 1250.8,926.2 1251.4,926.8 1252.0,931.3 1252.6,939.2 1253.2,937.5 1253.8,927.6 1254.4,917.4 1255.0,914.9 1255.6,912.4 1256.2,908.9 1256.8,904.3 1257.4,899.4 1258.0,898.1 1258.6,900.0 1259.2,907.0 1259.8,913.9 1260.4,911.2 1261.1,913.4 1261.7,915.1 1262.3,914.9 1262.9,916.8 1263.5,918.9 1264.1,915.9 1264.7,912.8 1265.3,912.6 1265.9,910.5 1266.5,914.3 1267.1,914.0 1267.7,913.5 1268.3,913.4 1268.9,914.1 1269.5,916.2 1270.1,913.5 1270.7,915.3 1271.3,915.9 1271.9,912.9 1272.6,911.3 1273.2,909.4 1273.8,911.0 1274.4,914.7 1275.0,916.0 1275.6,913.6 1276.2,916.4 1276.8,916.5 1277.4,914.5 1278.0,916.3 1278.6,915.2 1279.2,917.6 1279.8,917.0 1280.4,916.2 1281.0,920.5 1281.6,918.7 1282.2,917.8 1282.8,917.7 1283.4,917.7 1284.1,914.5 1284.7,916.9 1285.3,916.8 1285.9,917.3 1286.5,917.6 1287.1,919.7 1287.7,921.0 1288.3,920.2 1288.9,918.2 1289.5,915.9 1290.1,917.9 1290.7,914.7 1291.3,915.2 1291.9,913.0 1292.5,917.3 1293.1,916.1 1293.7,910.6 1294.3,909.3 1294.9,910.1 1295.6,912.8 1296.2,915.8 1296.8,917.1 1297.4,917.0 1298.0,916.3 1298.6,915.2 1299.2,916.2 1299.8,913.5 1300.4,913.5 1301.0,915.4 1301.6,918.0 1302.2,913.9 1302.8,908.1 1303.4,917.7 1304.0,921.7 1304.6,920.2 1305.2,914.5 1305.8,909.3 1306.4,914.7 1307.1,913.5 1307.7,912.3 1308.3,918.1 1308.9,907.8 1309.5,907.6 1310.1,914.0 1310.7,912.0 1311.3,918.2 1311.9,922.8 1312.5,915.5 1313.1,921.4 1313.7,921.9 1314.3,913.8 1314.9,915.8 1315.5,913.0 1316.1,914.8 1316.7,921.0 1317.3,923.4 1317.9,919.0 1318.6,920.5 1319.2,921.0 1319.8,918.5 1320.4,913.4 1321.0,910.9 1321.6,914.6 1322.2,913.3 1322.8,912.4 1323.4,915.3 1324.0,917.8 1324.6,919.8 1325.2,918.0 1325.8,913.2 1326.4,912.9 1327.0,911.7 1327.6,917.0 1328.2,916.0 1328.8,912.6 1329.4,912.2 1330.1,916.8 1330.7,916.0 1331.3,915.8 1331.9,916.8 1332.5,912.8 1333.1,918.4 1333.7,916.4 1334.3,913.7 1334.9,913.5 1335.5,909.9 1336.1,911.8 1336.7,916.2 1337.3,919.8 1337.9,915.6 1338.5,918.2 1339.1,915.0 1339.7,911.0 1340.3,920.4 1340.9,919.1 1341.6,918.4 1342.2,915.3 1342.8,911.6 1343.4,913.1 1344.0,915.7 1344.6,912.1 1345.2,912.6 1345.8,912.2 1346.4,912.7 1347.0,918.1 1347.6,917.3 1348.2,917.1 1348.8,916.1 1349.4,911.8 1350.0,910.6 1350.6,913.9 1351.2,916.0 1351.8,914.5 1352.4,912.0 1353.1,916.2 1353.7,922.1 1354.3,916.8 1354.9,910.9 1355.5,911.8 1356.1,912.6 1356.7,915.7 1357.3,921.0 1357.9,918.9 1358.5,916.9 1359.1,919.1 1359.7,913.6 1360.3,913.7 1360.9,918.9 1361.5,911.6 1362.1,909.4 1362.7,912.7 1363.3,918.1 1363.9,918.5 1364.6,918.1 1365.2,919.0 1365.8,915.8 1366.4,916.4 1367.0,914.7 1367.6,913.2 1368.2,915.9 1368.8,916.9 1369.4,916.0 1370.0,916.2 1370.6,916.5 1371.2,915.3 1371.8,913.9 1372.4,914.9 1373.0,912.0 1373.6,912.3 1374.2,911.7 1374.8,914.8 1375.4,914.1 1376.1,910.0 1376.7,918.2 1377.3,918.6 1377.9,915.5 1378.5,917.8 1379.1,921.6 1379.7,918.6 1380.3,915.9 1380.9,916.3 1381.5,917.6 1382.1,916.9 1382.7,917.2 1383.3,918.5 1383.9,915.1 1384.5,915.5 1385.1,913.7 1385.7,908.9 1386.3,913.7 1386.9,919.4 1387.6,914.3 1388.2,913.6 1388.8,920.5 1389.4,921.7 1390.0,917.7 1390.6,916.7 1391.2,915.5 1391.8,913.6 1392.4,913.6 1393.0,917.1 1393.6,921.2 1394.2,915.5 1394.8,913.7 1395.4,918.8 1396.0,919.3 1396.6,913.2 1397.2,911.1 1397.8,918.0 1398.4,915.2 1399.1,916.1 1399.7,916.9 1400.3,916.1 1400.9,918.8 1401.5,919.7 1402.1,917.5 1402.7,917.5 1403.3,915.8 1403.9,912.9 1404.5,912.1 1405.1,912.2 1405.7,915.1 1406.3,917.8 1406.9,914.9 1407.5,917.0 1408.1,917.3 1408.7,915.0 1409.3,916.0 1409.9,915.3 1410.6,915.9 1411.2,918.5 1411.8,916.2 1412.4,917.4 1413.0,916.3 1413.6,914.8 1414.2,912.3 1414.8,913.9 1415.4,917.5 1416.0,919.8 1416.6,912.6 1417.2,907.8 1417.8,909.1 1418.4,911.8 1419.0,915.5 1419.6,917.3 1420.2,917.3 1420.8,920.3 1421.4,918.4 1422.1,920.8 1422.7,919.7 1423.3,917.8 1423.9,914.0 1424.5,915.5 1425.1,913.6 1425.7,913.3 1426.3,915.3 1426.9,916.4 1427.5,917.7 1428.1,925.3 1428.7,923.9 1429.3,919.6 1429.9,917.5 1430.5,915.3 1431.1,911.9 1431.7,912.0 1432.3,922.3 1432.9,915.6 1433.6,912.4 1434.2,918.6 1434.8,912.9 1435.4,913.7 1436.0,920.2 1436.6,912.3 1437.2,905.7 1437.8,905.7 1438.4,911.9 1439.0,913.2 1439.6,915.6 1440.2,914.2 1440.8,914.6 1441.4,911.4 1442.0,911.3 1442.6,914.3 1443.2,920.6 1443.8,921.0 1444.4,916.4 1445.1,913.5 1445.7,915.1 1446.3,916.2 1446.9,913.4 1447.5,915.6 1448.1,913.9 1448.7,910.4 1449.3,919.2 1449.9,920.2 1450.5,921.4 1451.1,922.3 1451.7,918.6 1452.3,917.9 1452.9,917.3 1453.5,920.9 1454.1,924.3 1454.7,915.9 1455.3,918.2 1455.9,920.4 1456.6,922.3 1457.2,922.8 1457.8,916.5 1458.4,914.1 1459.0,914.6 1459.6,915.5 1460.2,914.1 1460.8,909.4 1461.4,913.4 1462.0,916.2 1462.6,908.7 1463.2,913.5 1463.8,916.2 1464.4,912.2 1465.0,908.9 1465.6,909.1 1466.2,914.9 1466.8,914.9 1467.4,918.9 1468.1,913.9 1468.7,909.9 1469.3,911.9 1469.9,908.4 1470.5,908.7 1471.1,911.3 1471.7,913.2 1472.3,911.2 1472.9,911.2 1473.5,916.4 1474.1,914.6 1474.7,916.0 1475.3,912.8 1475.9,915.8 1476.5,920.3 1477.1,918.2 1477.7,918.2 1478.3,925.0 1478.9,919.5 1479.6,917.5 1480.2,914.3 1480.8,914.3 1481.4,914.3 1482.0,918.4 1482.6,919.5 1483.2,918.7 1483.8,915.3 1484.4,912.6 1485.0,913.7 1485.6,915.5 1486.2,912.1 1486.8,916.5 1487.4,919.5 1488.0,919.2 1488.6,913.4 1489.2,914.3 1489.8,917.6 1490.4,919.9 1491.0,914.4 1491.7,909.5 1492.3,913.6 1492.9,910.0 1493.5,913.5 1494.1,912.2 1494.7,912.1 1495.3,915.0 1495.9,916.8 1496.5,919.6 1497.1,916.5 1497.7,914.8 1498.3,914.2 1498.9,915.3 1499.5,912.1 1500.1,915.2 1500.7,913.2 1501.3,914.5 1501.9,914.5 1502.5,913.9 1503.2,911.1 1503.8,914.6 1504.4,918.9 1505.0,918.0 1505.6,911.9 1506.2,916.5 1506.8,918.1 1507.4,917.5 1508.0,915.5 1508.6,917.5 1509.2,912.3 1509.8,912.0 1510.4,912.5 1511.0,915.2 1511.6,914.6 1512.2,910.2 1512.8,913.8 1513.4,914.6 1514.0,918.2 1514.7,918.4 1515.3,918.4 1515.9,916.5 1516.5,919.1 1517.1,921.8 1517.7,920.6 1518.3,919.8 1518.9,919.3 1519.5,914.5 1520.1,913.3 1520.7,915.7 1521.3,915.6 1521.9,912.8 1522.5,917.8 1523.1,916.9 1523.7,920.9 1524.3,919.6 1524.9,916.5 1525.5,921.8 1526.2,920.6 1526.8,920.1 1527.4,916.5 1528.0,914.4 1528.6,913.2 1529.2,913.5 1529.8,915.4 1530.4,912.9 1531.0,915.6 1531.6,917.9 1532.2,916.1 1532.8,913.9 1533.4,914.7 1534.0,915.3 1534.6,918.9 1535.2,916.4 1535.8,913.4 1536.4,914.9 1537.0,911.0 1537.7,911.4 1538.3,915.8 1538.9,914.5 1539.5,910.0 1540.1,913.4 1540.7,914.6 1541.3,914.8 1541.9,920.8 1542.5,916.2 1543.1,912.1 1543.7,910.3 1544.3,909.9 1544.9,911.9 1545.5,910.1 1546.1,914.5 1546.7,918.3 1547.3,916.6 1547.9,911.8 1548.5,907.1 1549.2,909.4 1549.8,909.6 1550.4,913.6 1551.0,918.0 1551.6,915.3 1552.2,917.3 1552.8,914.9 1553.4,908.1 1554.0,906.3 1554.6,906.2 1555.2,911.0 1555.8,913.5 1556.4,912.9 1557.0,918.3 1557.6,915.0 1558.2,913.4 1558.8,912.5 1559.4,913.2 1560.0,915.4 1560.7,922.2 1561.3,922.6 1561.9,920.0 1562.5,918.4 1563.1,917.1 1563.7,914.9 1564.3,918.1 1564.9,914.5 1565.5,912.5 1566.1,917.9 1566.7,923.0 1567.3,923.5 1567.9,921.5 1568.5,917.2 1569.1,913.5 1569.7,916.6 1570.3,922.2 1570.9,916.4 1571.5,918.5 1572.2,919.0 1572.8,913.1 1573.4,917.4 1574.0,914.5 1574.6,908.7 1575.2,910.3 1575.8,912.0 1576.4,915.8 1577.0,918.6 1577.6,919.6 1578.2,919.0 1578.8,911.8 1579.4,913.9 1580.0,914.5 1580.6,913.8 1581.2,912.5 1581.8,908.8 1582.4,912.5 1583.0,912.1 1583.7,912.4 1584.3,914.4 1584.9,917.8 1585.5,914.6 1586.1,913.6 1586.7,912.6 1587.3,910.6 1587.9,914.1 1588.5,918.9 1589.1,918.2 1589.7,919.7 1590.3,919.3 1590.9,909.8 1591.5,909.5 1592.1,911.3 1592.7,912.7 1593.3,911.0 1593.9,916.4 1594.5,919.7 1595.2,918.4 1595.8,915.3 1596.4,916.2 1597.0,919.2 1597.6,926.1 1598.2,929.7 1598.8,925.7 1599.4,918.1 1600.0,912.4 1600.6,904.2 1601.2,897.0 1601.8,897.3 1602.4,904.8 1603.0,911.3 1603.6,914.4 1604.2,915.1 1604.8,915.1 1605.4,918.7 1606.0,922.9 1606.7,925.4 1607.3,924.0 1607.9,918.9 1608.5,918.8 1609.1,920.2 1609.7,921.8 1610.3,918.1 1610.9,918.3 1611.5,912.3 1612.1,914.1 1612.7,915.6 1613.3,918.0 1613.9,915.0 1614.5,916.0 1615.1,916.2 1615.7,916.2 1616.3,917.4 1616.9,915.0 1617.5,912.1 1618.2,912.8 1618.8,913.8 1619.4,915.0 1620.0,914.0 1620.6,912.4 1621.2,914.4 1621.8,913.5 1622.4,917.1 1623.0,918.1 1623.6,915.8 1624.2,912.9 1624.8,909.8 1625.4,913.1 1626.0,913.4 1626.6,909.7 1627.2,912.6 1627.8,915.4 1628.4,916.9 1629.0,914.4 1629.7,917.0 1630.3,915.4 1630.9,912.7 1631.5,913.4 1632.1,915.7 1632.7,919.2 1633.3,916.3 1633.9,909.4 1634.5,910.4 1635.1,914.7 1635.7,913.0 1636.3,915.5 1636.9,918.5 1637.5,921.4 1638.1,917.7 1638.7,915.7 1639.3,915.9 1639.9,916.7 1640.5,919.3 1641.2,919.7 1641.8,916.4 1642.4,917.0 1643.0,915.4 1643.6,915.9 1644.2,911.8 1644.8,911.4 1645.4,916.1 1646.0,917.5 1646.6,916.8 1647.2,917.3 1647.8,917.9 1648.4,919.1 1649.0,916.6 1649.6,918.1 1650.2,915.6 1650.8,913.2 1651.4,915.0 1652.0,914.4 1652.7,915.7 1653.3,917.8 1653.9,914.8 1654.5,916.9 1655.1,919.6 1655.7,919.2 1656.3,917.6 1656.9,916.1 1657.5,912.9 1658.1,914.7 1658.7,918.3 1659.3,918.4 1659.9,913.5 1660.5,913.8 1661.1,913.7 1661.7,911.9 1662.3,913.5 1662.9,916.0 1663.5,915.2 1664.2,913.5 1664.8,914.8 1665.4,911.6 1666.0,908.5 1666.6,909.7 1667.2,915.9 1667.8,917.4 1668.4,914.6 1669.0,911.7 1669.6,914.8 1670.2,916.7 1670.8,918.3 1671.4,918.6 1672.0,912.5 1672.6,914.9 1673.2,916.1 1673.8,919.3 1674.4,911.7 1675.0,911.8 1675.7,912.0 1676.3,911.7 1676.9,915.9 1677.5,915.2 1678.1,913.2 1678.7,915.8 1679.3,914.0 1679.9,912.2 1680.5,915.9 1681.1,914.1 1681.7,914.1 1682.3,912.3 1682.9,916.8 1683.5,918.4 1684.1,914.9 1684.7,915.4 1685.3,913.9 1685.9,913.3 1686.5,915.1 1687.2,913.7 1687.8,914.3 1688.4,915.6 1689.0,914.2 1689.6,916.9 1690.2,916.1 1690.8,911.5 1691.4,911.5 1692.0,914.3 1692.6,915.1 1693.2,909.6 1693.8,914.6 1694.4,918.6 1695.0,916.0 1695.6,917.2 1696.2,918.0 1696.8,918.7 1697.4,917.1 1698.0,911.7 1698.7,914.1 1699.3,910.2 1699.9,905.6 1700.5,907.8 1701.1,917.4 1701.7,919.1 1702.3,916.6 1702.9,914.7 1703.5,918.2 1704.1,921.0 1704.7,921.2 1705.3,919.0 1705.9,917.7 1706.5,917.6 1707.1,913.2 1707.7,912.7 1708.3,910.7 1708.9,913.2 1709.5,912.9 1710.2,912.9 1710.8,911.8 1711.4,911.2 1712.0,912.5 1712.6,912.2 1713.2,916.4 1713.8,911.7 1714.4,912.6 1715.0,910.5 1715.6,908.2 1716.2,908.2 1716.8,916.1 1717.4,917.1 1718.0,916.1 1718.6,916.7 1719.2,915.7 1719.8,917.8 1720.4,913.2 1721.0,912.5 1721.7,913.6 1722.3,911.9 1722.9,916.3 1723.5,918.2 1724.1,912.0 1724.7,910.1 1725.3,916.2 1725.9,915.9 1726.5,913.2 1727.1,914.5 1727.7,917.7 1728.3,913.9 1728.9,916.1 1729.5,913.0 1730.1,914.1 1730.7,919.5 1731.3,914.2 1731.9,909.8 1732.5,913.0 1733.1,918.7 1733.8,916.6 1734.4,916.1 1735.0,914.6 1735.6,914.9 1736.2,917.4 1736.8,914.4 1737.4,916.9 1738.0,920.4 1738.6,917.2 1739.2,913.3 1739.8,912.3 1740.4,919.2 1741.0,915.9 1741.6,912.7 1742.2,914.8 1742.8,915.4 1743.4,916.4 1744.0,914.2 1744.6,912.2"/>
<rect x="1127.20" y="831.20" width="619.40" height="142.30" fill="none" stroke="#000" stroke-width="1.8"/>
<rect x="1639.60" y="841.85" width="14.6" height="10.4" fill="#fffff4" stroke="#ccc" stroke-width="1"/>
<rect x="1641.00" y="843.10" width="12" height="8" fill="#0000ff"/>
<path d="M1745.10 821.15L1756.10 832.15L1745.10 843.15L1734.10 832.15Z" fill="#00ff00"/>
</svg>
<div class="yl" style="left:1085.70px;top:824.60px">9000</div>
<div class="yl" style="left:1085.70px;top:859.65px">8500</div>
<div class="yl" style="left:1085.70px;top:894.70px">8000</div>
<div class="yl" style="left:1085.70px;top:929.75px">7500</div>
<div class="yl" style="left:1085.70px;top:964.80px">7000</div>
<div class="xl" style="left:1107.20px;top:976.90px">0</div>
<div class="xl" style="left:1167.73px;top:976.90px">100</div>
<div class="xl" style="left:1228.25px;top:976.90px">200</div>
<div class="xl" style="left:1288.78px;top:976.90px">300</div>
<div class="xl" style="left:1349.30px;top:976.90px">400</div>
<div class="xl" style="left:1409.83px;top:976.90px">500</div>
<div class="xl" style="left:1470.35px;top:976.90px">600</div>
<div class="xl" style="left:1530.88px;top:976.90px">700</div>
<div class="xl" style="left:1591.40px;top:976.90px">800</div>
<div class="xl" style="left:1651.93px;top:976.90px">900</div>
<div class="xl" style="left:1712.45px;top:976.90px">1000</div>
<div class="lgt" style="left:1657.90px;top:839.60px;color:#000">aida08 3.8.W</div>
</div>
</body></html>
